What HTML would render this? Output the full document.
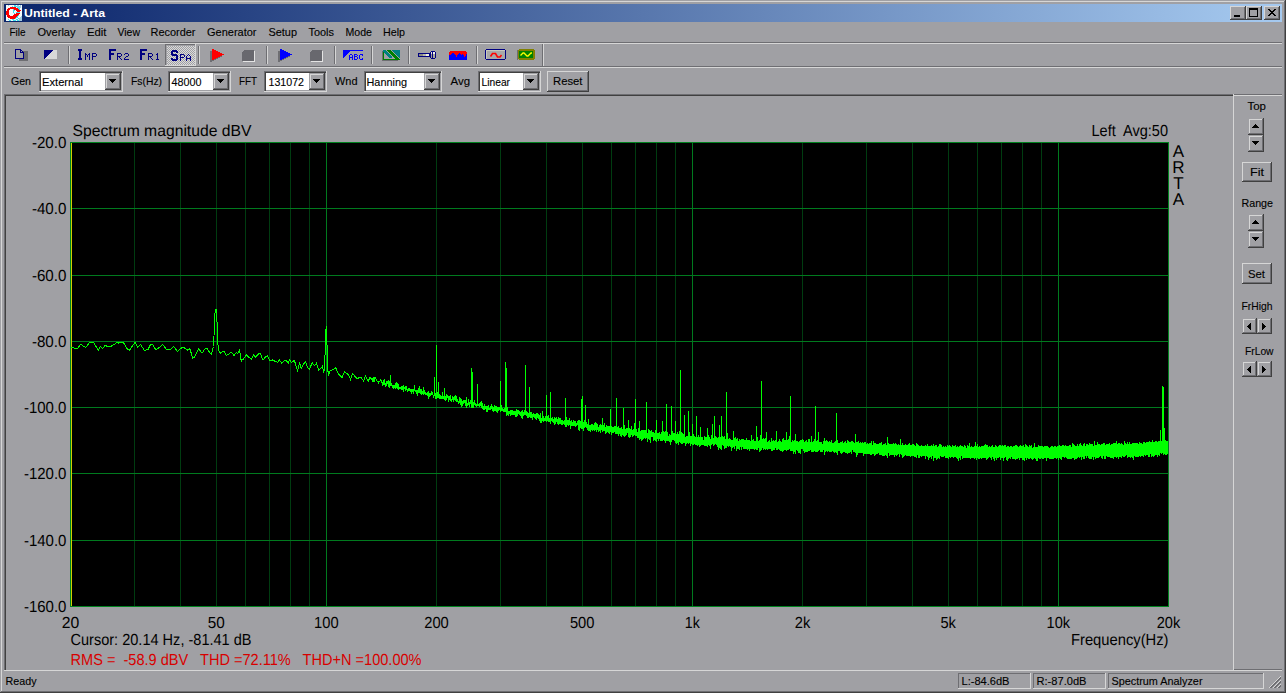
<!DOCTYPE html><html><head><meta charset="utf-8"><style>html,body{margin:0;padding:0;background:#A0A0A4;overflow:hidden}svg{display:block}text{font-family:"Liberation Sans",sans-serif}</style></head><body><svg width="1286" height="693" viewBox="0 0 1286 693">
<rect x="0" y="0" width="1286" height="693" fill="#A0A0A4" />
<rect x="1" y="1" width="1284" height="1" fill="#D6D6D6" />
<rect x="1" y="1" width="1" height="691" fill="#D6D6D6" />
<rect x="1284" y="1" width="1" height="691" fill="#6E6E72" />
<rect x="1" y="691" width="1284" height="1" fill="#6E6E72" />
<rect x="1285" y="0" width="1" height="693" fill="#404040" />
<rect x="0" y="692" width="1286" height="1" fill="#404040" />
<defs><linearGradient id="tg" x1="0" x2="1" y1="0" y2="0"><stop offset="0" stop-color="#0A246A"/><stop offset="1" stop-color="#A6CAF0"/></linearGradient></defs>
<rect x="4" y="4" width="1278" height="18" fill="url(#tg)" />
<rect x="6" y="5" width="16" height="16" fill="#F4FAFC" />
<path d="M10 7h6v1h-6zM8 8h10v1h-10zM7 9h3v1h-3zM14 9h5v1h-5zM7 10h2v1h-2zM16 10h5v1h-5zM6 11h3v1h-3zM17 11h3v1h-3zM6 12h3v1h-3zM6 13h3v1h-3zM16 13h4v1h-4zM6 14h3v1h-3zM14 14h5v1h-5zM7 15h3v1h-3zM13 15h5v1h-5zM7 16h10v1h-10zM8 17h8v1h-8zM10 18h5v1h-5z" fill="#FF0000"/>
<path d="M14 5h2v1h-2zM12 6h1v1h-1zM14 6h3v1h-3zM19 6h1v1h-1zM17 7h2v1h-2zM18 8h2v1h-2zM13 9h1v1h-1zM19 9h1v1h-1zM13 10h2v1h-2zM13 11h1v1h-1zM13 12h1v1h-1zM16 12h4v1h-4zM14 13h1v1h-1zM18 15h1v1h-1zM17 16h1v1h-1zM16 17h2v1h-2zM15 18h1v1h-1zM18 18h1v1h-1zM8 19h1v1h-1zM12 19h2v1h-2zM16 19h2v1h-2zM9 20h2v1h-2zM13 20h3v1h-3zM17 20h2v1h-2z" fill="#40E0F0"/>
<path d="M8 5h1v1h-1zM17 5h2v1h-2zM20 5h1v1h-1zM17 6h2v1h-2zM20 6h1v1h-1zM19 7h2v1h-2zM21 16h1v1h-1zM20 17h2v1h-2zM19 18h3v1h-3zM19 19h3v1h-3zM19 20h3v1h-3z" fill="#A0C8E0"/>
<text x="24" y="17" font-size="11" fill="#FFFFFF" font-weight="bold" text-anchor="start" textLength="81" lengthAdjust="spacingAndGlyphs"  xml:space="preserve">Untitled - Arta</text>
<rect x="1230" y="6" width="16" height="14" fill="#A0A0A4" />
<rect x="1230" y="6" width="16" height="1" fill="#D6D6D6" />
<rect x="1230" y="6" width="1" height="14" fill="#D6D6D6" />
<rect x="1230" y="19" width="16" height="1" fill="#404040" />
<rect x="1245" y="6" width="1" height="14" fill="#404040" />
<rect x="1231" y="18" width="14" height="1" fill="#6E6E72" />
<rect x="1244" y="7" width="1" height="12" fill="#6E6E72" />
<rect x="1246" y="6" width="16" height="14" fill="#A0A0A4" />
<rect x="1246" y="6" width="16" height="1" fill="#D6D6D6" />
<rect x="1246" y="6" width="1" height="14" fill="#D6D6D6" />
<rect x="1246" y="19" width="16" height="1" fill="#404040" />
<rect x="1261" y="6" width="1" height="14" fill="#404040" />
<rect x="1247" y="18" width="14" height="1" fill="#6E6E72" />
<rect x="1260" y="7" width="1" height="12" fill="#6E6E72" />
<rect x="1264" y="6" width="16" height="14" fill="#A0A0A4" />
<rect x="1264" y="6" width="16" height="1" fill="#D6D6D6" />
<rect x="1264" y="6" width="1" height="14" fill="#D6D6D6" />
<rect x="1264" y="19" width="16" height="1" fill="#404040" />
<rect x="1279" y="6" width="1" height="14" fill="#404040" />
<rect x="1265" y="18" width="14" height="1" fill="#6E6E72" />
<rect x="1278" y="7" width="1" height="12" fill="#6E6E72" />
<rect x="1234" y="15" width="6" height="2" fill="#000" />
<rect x="1249" y="8" width="9" height="2" fill="#000" />
<rect x="1249" y="16" width="9" height="1" fill="#000" />
<rect x="1249" y="8" width="1" height="9" fill="#000" />
<rect x="1257" y="8" width="1" height="9" fill="#000" />
<path d="M1268 9h2v1h-2zM1274 9h2v1h-2zM1269 10h2v1h-2zM1273 10h2v1h-2zM1270 11h4v1h-4zM1271 12h2v1h-2zM1270 13h4v1h-4zM1269 14h2v1h-2zM1273 14h2v1h-2zM1268 15h2v1h-2zM1274 15h2v1h-2z" fill="#000"/>
<text x="9.5" y="36" font-size="11" fill="#000" font-weight="normal" text-anchor="start" textLength="16" lengthAdjust="spacingAndGlyphs" stroke="#000" stroke-width="0.12"  xml:space="preserve">File</text>
<text x="37.5" y="36" font-size="11" fill="#000" font-weight="normal" text-anchor="start" textLength="38" lengthAdjust="spacingAndGlyphs" stroke="#000" stroke-width="0.12"  xml:space="preserve">Overlay</text>
<text x="87.0" y="36" font-size="11" fill="#000" font-weight="normal" text-anchor="start" textLength="19.5" lengthAdjust="spacingAndGlyphs" stroke="#000" stroke-width="0.12"  xml:space="preserve">Edit</text>
<text x="117.5" y="36" font-size="11" fill="#000" font-weight="normal" text-anchor="start" textLength="22.5" lengthAdjust="spacingAndGlyphs" stroke="#000" stroke-width="0.12"  xml:space="preserve">View</text>
<text x="150.5" y="36" font-size="11" fill="#000" font-weight="normal" text-anchor="start" textLength="45" lengthAdjust="spacingAndGlyphs" stroke="#000" stroke-width="0.12"  xml:space="preserve">Recorder</text>
<text x="207.0" y="36" font-size="11" fill="#000" font-weight="normal" text-anchor="start" textLength="49.5" lengthAdjust="spacingAndGlyphs" stroke="#000" stroke-width="0.12"  xml:space="preserve">Generator</text>
<text x="268.5" y="36" font-size="11" fill="#000" font-weight="normal" text-anchor="start" textLength="28.5" lengthAdjust="spacingAndGlyphs" stroke="#000" stroke-width="0.12"  xml:space="preserve">Setup</text>
<text x="308.5" y="36" font-size="11" fill="#000" font-weight="normal" text-anchor="start" textLength="25.5" lengthAdjust="spacingAndGlyphs" stroke="#000" stroke-width="0.12"  xml:space="preserve">Tools</text>
<text x="345.5" y="36" font-size="11" fill="#000" font-weight="normal" text-anchor="start" textLength="26.5" lengthAdjust="spacingAndGlyphs" stroke="#000" stroke-width="0.12"  xml:space="preserve">Mode</text>
<text x="383.0" y="36" font-size="11" fill="#000" font-weight="normal" text-anchor="start" textLength="22" lengthAdjust="spacingAndGlyphs" stroke="#000" stroke-width="0.12"  xml:space="preserve">Help</text>
<rect x="4" y="42" width="1278" height="1" fill="#6E6E72" />
<rect x="4" y="43" width="1278" height="1" fill="#D6D6D6" />
<rect x="4" y="66" width="1278" height="1" fill="#6E6E72" />
<rect x="4" y="67" width="1278" height="1" fill="#D6D6D6" />
<rect x="19" y="51" width="9" height="10" fill="#6E6E72" />
<rect x="15" y="49" width="8" height="10" fill="#A0A0A4" />
<path d="M15 49h6v1h-6zM15 50h1v1h-1zM20 50h2v1h-2zM15 51h1v1h-1zM20 51h1v1h-1zM22 51h1v1h-1zM15 52h1v1h-1zM20 52h4v1h-4zM15 53h1v1h-1zM23 53h1v1h-1zM15 54h1v1h-1zM23 54h1v1h-1zM15 55h1v1h-1zM23 55h1v1h-1zM15 56h1v1h-1zM23 56h1v1h-1zM15 57h1v1h-1zM23 57h1v1h-1zM15 58h9v1h-9z" fill="#000080"/>
<path d="M53 50h4v9h-13z" fill="#D8D8D8" shape-rendering="crispEdges"/>
<path d="M44 50h9l-9 9z" fill="#000080" shape-rendering="crispEdges"/>
<rect x="68" y="46" width="1" height="18" fill="#6E6E72" />
<rect x="69" y="46" width="1" height="18" fill="#D6D6D6" />
<defs><pattern id="dith" width="2" height="2" patternUnits="userSpaceOnUse"><rect width="2" height="2" fill="#A0A0A4"/><rect x="1" width="1" height="1" fill="#DADADA"/><rect y="1" width="1" height="1" fill="#DADADA"/></pattern></defs>
<rect x="165" y="44" width="31" height="22" fill="url(#dith)" />
<rect x="165" y="44" width="31" height="1" fill="#6E6E72" />
<rect x="165" y="44" width="1" height="22" fill="#6E6E72" />
<rect x="166" y="45" width="29" height="1" fill="#A0A0A4" />
<rect x="166" y="45" width="1" height="20" fill="#A0A0A4" />
<rect x="165" y="65" width="31" height="1" fill="#D6D6D6" />
<rect x="195" y="44" width="1" height="22" fill="#D6D6D6" />
<rect x="78" y="49" width="4" height="2" fill="#000080" />
<rect x="79" y="51" width="2" height="7" fill="#000080" />
<rect x="78" y="58" width="4" height="2" fill="#000080" />
<path d="M85 53h1v1h-1zM89 53h1v1h-1zM85 54h1v1h-1zM86 54h1v1h-1zM88 54h1v1h-1zM89 54h1v1h-1zM85 55h1v1h-1zM87 55h1v1h-1zM89 55h1v1h-1zM85 56h1v1h-1zM87 56h1v1h-1zM89 56h1v1h-1zM85 57h1v1h-1zM89 57h1v1h-1zM85 58h1v1h-1zM89 58h1v1h-1zM85 59h1v1h-1zM89 59h1v1h-1z" fill="#000080"/>
<path d="M92 53h1v1h-1zM93 53h1v1h-1zM94 53h1v1h-1zM95 53h1v1h-1zM92 54h1v1h-1zM96 54h1v1h-1zM92 55h1v1h-1zM96 55h1v1h-1zM92 56h1v1h-1zM93 56h1v1h-1zM94 56h1v1h-1zM95 56h1v1h-1zM92 57h1v1h-1zM92 58h1v1h-1zM92 59h1v1h-1z" fill="#000080"/>
<rect x="109" y="49" width="2" height="11" fill="#000080" />
<rect x="109" y="49" width="7" height="2" fill="#000080" />
<rect x="109" y="53" width="5" height="2" fill="#000080" />
<path d="M117 53h1v1h-1zM118 53h1v1h-1zM119 53h1v1h-1zM120 53h1v1h-1zM117 54h1v1h-1zM121 54h1v1h-1zM117 55h1v1h-1zM121 55h1v1h-1zM117 56h1v1h-1zM118 56h1v1h-1zM119 56h1v1h-1zM120 56h1v1h-1zM117 57h1v1h-1zM119 57h1v1h-1zM117 58h1v1h-1zM120 58h1v1h-1zM117 59h1v1h-1zM121 59h1v1h-1z" fill="#000080"/>
<path d="M125 53h1v1h-1zM126 53h1v1h-1zM127 53h1v1h-1zM124 54h1v1h-1zM128 54h1v1h-1zM128 55h1v1h-1zM126 56h1v1h-1zM127 56h1v1h-1zM125 57h1v1h-1zM124 58h1v1h-1zM124 59h1v1h-1zM125 59h1v1h-1zM126 59h1v1h-1zM127 59h1v1h-1zM128 59h1v1h-1z" fill="#000080"/>
<rect x="140" y="49" width="2" height="11" fill="#000080" />
<rect x="140" y="49" width="7" height="2" fill="#000080" />
<rect x="140" y="53" width="5" height="2" fill="#000080" />
<path d="M148 53h1v1h-1zM149 53h1v1h-1zM150 53h1v1h-1zM151 53h1v1h-1zM148 54h1v1h-1zM152 54h1v1h-1zM148 55h1v1h-1zM152 55h1v1h-1zM148 56h1v1h-1zM149 56h1v1h-1zM150 56h1v1h-1zM151 56h1v1h-1zM148 57h1v1h-1zM150 57h1v1h-1zM148 58h1v1h-1zM151 58h1v1h-1zM148 59h1v1h-1zM152 59h1v1h-1z" fill="#000080"/>
<path d="M157 53h1v1h-1zM156 54h1v1h-1zM157 54h1v1h-1zM157 55h1v1h-1zM157 56h1v1h-1zM157 57h1v1h-1zM157 58h1v1h-1zM156 59h1v1h-1zM157 59h1v1h-1zM158 59h1v1h-1z" fill="#000080"/>
<path d="M172 50h5v1h-5zM171 51h7v1h-7zM171 52h2v1h-2zM176 52h2v1h-2zM171 53h2v1h-2zM171 54h6v1h-6zM172 55h6v1h-6zM176 56h2v1h-2zM176 57h2v1h-2zM171 58h2v1h-2zM176 58h2v1h-2zM171 59h7v1h-7zM172 60h5v1h-5z" fill="#000080"/>
<path d="M180 54h1v1h-1zM181 54h1v1h-1zM182 54h1v1h-1zM183 54h1v1h-1zM180 55h1v1h-1zM184 55h1v1h-1zM180 56h1v1h-1zM184 56h1v1h-1zM180 57h1v1h-1zM181 57h1v1h-1zM182 57h1v1h-1zM183 57h1v1h-1zM180 58h1v1h-1zM180 59h1v1h-1zM180 60h1v1h-1z" fill="#000080"/>
<path d="M188 54h1v1h-1zM187 55h1v1h-1zM189 55h1v1h-1zM186 56h1v1h-1zM190 56h1v1h-1zM186 57h1v1h-1zM190 57h1v1h-1zM186 58h1v1h-1zM187 58h1v1h-1zM188 58h1v1h-1zM189 58h1v1h-1zM190 58h1v1h-1zM186 59h1v1h-1zM190 59h1v1h-1zM186 60h1v1h-1zM190 60h1v1h-1z" fill="#000080"/>
<rect x="198" y="46" width="1" height="18" fill="#6E6E72" />
<rect x="199" y="46" width="1" height="18" fill="#D6D6D6" />
<path d="M212 49h2v1h-2zM212 50h4v1h-4zM212 51h6v1h-6zM212 52h8v1h-8zM212 53h10v1h-10zM212 54h12v1h-12zM212 55h10v1h-10zM212 56h8v1h-8zM212 57h6v1h-6zM212 58h4v1h-4zM212 59h2v1h-2z" fill="#6E6E72" transform="translate(-2,2)"/>
<path d="M212 49h2v1h-2zM212 50h4v1h-4zM212 51h6v1h-6zM212 52h8v1h-8zM212 53h10v1h-10zM212 54h12v1h-12zM212 55h10v1h-10zM212 56h8v1h-8zM212 57h6v1h-6zM212 58h4v1h-4zM212 59h2v1h-2z" fill="#FF0000"/>
<path d="M244 50H254V60L253 61H242V52Z" fill="#E4E4E4" transform="translate(1,1)" shape-rendering="crispEdges"/>
<path d="M244 50H254V60L253 61H242V52Z" fill="#68686E" shape-rendering="crispEdges"/>
<rect x="266" y="46" width="1" height="18" fill="#6E6E72" />
<rect x="267" y="46" width="1" height="18" fill="#D6D6D6" />
<path d="M280 49h2v1h-2zM280 50h4v1h-4zM280 51h6v1h-6zM280 52h8v1h-8zM280 53h10v1h-10zM280 54h12v1h-12zM280 55h10v1h-10zM280 56h8v1h-8zM280 57h6v1h-6zM280 58h4v1h-4zM280 59h2v1h-2z" fill="#6E6E72" transform="translate(-2,2)"/>
<path d="M280 49h2v1h-2zM280 50h4v1h-4zM280 51h6v1h-6zM280 52h8v1h-8zM280 53h10v1h-10zM280 54h12v1h-12zM280 55h10v1h-10zM280 56h8v1h-8zM280 57h6v1h-6zM280 58h4v1h-4zM280 59h2v1h-2z" fill="#0000FF"/>
<path d="M312 50H322V60L321 61H310V52Z" fill="#E4E4E4" transform="translate(1,1)" shape-rendering="crispEdges"/>
<path d="M312 50H322V60L321 61H310V52Z" fill="#68686E" shape-rendering="crispEdges"/>
<rect x="334" y="46" width="1" height="18" fill="#6E6E72" />
<rect x="335" y="46" width="1" height="18" fill="#D6D6D6" />
<rect x="343" y="50" width="20" height="1" fill="#0000FF" />
<path d="M343 51h7v1h-7zM343 52h6v1h-6zM343 53h5v1h-5zM343 54h4v1h-4zM343 55h3v1h-3zM343 56h2v1h-2zM343 57h1v1h-1z" fill="#0000FF"/>
<path d="M350 54h2v1h-2zM349 55h1v1h-1zM352 55h1v1h-1zM349 56h1v1h-1zM352 56h1v1h-1zM349 57h4v1h-4zM349 58h1v1h-1zM352 58h1v1h-1zM349 59h1v1h-1zM352 59h1v1h-1z" fill="#0000FF"/>
<path d="M354 54h3v1h-3zM354 55h1v1h-1zM357 55h1v1h-1zM354 56h3v1h-3zM354 57h1v1h-1zM357 57h1v1h-1zM354 58h1v1h-1zM357 58h1v1h-1zM354 59h3v1h-3z" fill="#0000FF"/>
<path d="M360 54h3v1h-3zM359 55h1v1h-1zM362 55h1v1h-1zM359 56h1v1h-1zM359 57h1v1h-1zM359 58h1v1h-1zM362 58h1v1h-1zM360 59h3v1h-3z" fill="#0000FF"/>
<rect x="371" y="46" width="1" height="18" fill="#6E6E72" />
<rect x="372" y="46" width="1" height="18" fill="#D6D6D6" />
<rect x="382" y="51" width="1" height="10" fill="#6E6E72" />
<rect x="382" y="60" width="16" height="1" fill="#6E6E72" />
<path d="M383 50h3v1h-3zM392 50h8v1h-8zM383 51h4v1h-4zM393 51h7v1h-7zM384 52h4v1h-4zM394 52h6v1h-6zM385 53h4v1h-4zM395 53h5v1h-5zM386 54h4v1h-4zM396 54h4v1h-4zM387 55h4v1h-4zM397 55h3v1h-3zM388 56h4v1h-4zM398 56h2v1h-2zM389 57h3v1h-3zM399 57h1v1h-1z" fill="#008080"/>
<path d="M387 50h4v1h-4zM388 51h4v1h-4zM389 52h4v1h-4zM390 53h4v1h-4zM391 54h4v1h-4zM392 55h4v1h-4zM393 56h4v1h-4zM394 57h4v1h-4zM395 58h4v1h-4zM396 59h4v1h-4zM383 52h1v8h-1z M383 59h17v1h-17z" fill="#008000"/>
<rect x="408" y="46" width="1" height="18" fill="#6E6E72" />
<rect x="409" y="46" width="1" height="18" fill="#D6D6D6" />
<rect x="418" y="53" width="13" height="4" fill="#000080" />
<rect x="419" y="54" width="4" height="2" fill="#8C8C80" />
<rect x="423" y="54" width="3" height="2" fill="#B8B8A8" />
<rect x="426" y="54" width="3" height="2" fill="#F0F0E0" />
<rect x="431" y="51" width="4" height="1" fill="#000080" />
<rect x="431" y="58" width="4" height="1" fill="#000080" />
<rect x="430" y="52" width="1" height="6" fill="#000080" />
<rect x="435" y="52" width="1" height="6" fill="#000080" />
<rect x="432" y="52" width="1" height="6" fill="#000080" />
<rect x="431" y="52" width="1" height="6" fill="#9C9C90" />
<rect x="431" y="52" width="1" height="2" fill="#E8E8E0" />
<rect x="433" y="52" width="2" height="6" fill="#A8A898" />
<rect x="433" y="52" width="2" height="2" fill="#F4F4EC" />
<rect x="449" y="51" width="18" height="9" fill="#0000FF" />
<path d="M449 52h1v3h-1zM450 51h1v4h-1zM451 51h1v3h-1zM452 51h1v2h-1zM453 51h1v2h-1zM454 51h1v3h-1zM455 51h1v4h-1zM456 51h1v6h-1zM457 51h1v4h-1zM458 51h1v3h-1zM459 51h1v2h-1zM460 51h1v3h-1zM461 51h1v4h-1zM462 51h1v3h-1zM463 51h1v4h-1zM464 51h1v6h-1zM465 51h1v5h-1zM466 52h1v2h-1z" fill="#FF0000"/>
<rect x="449" y="51" width="1" height="1" fill="#A0A0A4" />
<rect x="466" y="51" width="1" height="1" fill="#A0A0A4" />
<rect x="476" y="46" width="1" height="18" fill="#6E6E72" />
<rect x="477" y="46" width="1" height="18" fill="#D6D6D6" />
<path d="M485 50h1v-1h19v1h1v9h-1v1h-19v-1h-1z M486 50v9h19v-9z" fill="#000080" fill-rule="evenodd"/>
<rect x="486" y="50" width="19" height="9" fill="#A8A8A8" />
<rect x="486" y="50" width="19" height="1" fill="#C8C8C0" />
<rect x="486" y="50" width="1" height="9" fill="#C8C8C0" />
<path d="M490.5 56.5l2-3h3l2 3.5h2.5l1.5-2" fill="none" stroke="#FF0000" stroke-width="1.6"/>
<rect x="517" y="50" width="1" height="10" fill="#6E6E72" />
<path d="M519 49h15v1h1v9h-1v1h-15v-1h-1v-9h1z" fill="#808000"/>
<rect x="519" y="51" width="14" height="7" fill="#008000" />
<path d="M520.5 55.5l2.5-2.5h1l3 3h1l3-3h1" fill="none" stroke="#FFFF00" stroke-width="1.3"/>
<rect x="542" y="44" width="1" height="22" fill="#6E6E72" />
<rect x="543" y="44" width="1" height="22" fill="#D6D6D6" />
<text x="11.0" y="85" font-size="11" fill="#000" font-weight="normal" text-anchor="start" textLength="20" lengthAdjust="spacingAndGlyphs" stroke="#000" stroke-width="0.12"  xml:space="preserve">Gen</text>
<text x="131.0" y="85" font-size="11" fill="#000" font-weight="normal" text-anchor="start" textLength="31" lengthAdjust="spacingAndGlyphs" stroke="#000" stroke-width="0.12"  xml:space="preserve">Fs(Hz)</text>
<text x="239.0" y="85" font-size="11" fill="#000" font-weight="normal" text-anchor="start" textLength="18" lengthAdjust="spacingAndGlyphs" stroke="#000" stroke-width="0.12"  xml:space="preserve">FFT</text>
<text x="335.0" y="85" font-size="11" fill="#000" font-weight="normal" text-anchor="start" textLength="22.5" lengthAdjust="spacingAndGlyphs" stroke="#000" stroke-width="0.12"  xml:space="preserve">Wnd</text>
<text x="450.5" y="85" font-size="11" fill="#000" font-weight="normal" text-anchor="start" textLength="19.5" lengthAdjust="spacingAndGlyphs" stroke="#000" stroke-width="0.12"  xml:space="preserve">Avg</text>
<rect x="39" y="71" width="84" height="21" fill="#A0A0A4" />
<rect x="39" y="71" width="84" height="1" fill="#6E6E72" />
<rect x="39" y="71" width="1" height="21" fill="#6E6E72" />
<rect x="40" y="72" width="82" height="1" fill="#404040" />
<rect x="40" y="72" width="1" height="19" fill="#404040" />
<rect x="39" y="91" width="84" height="1" fill="#D6D6D6" />
<rect x="122" y="71" width="1" height="21" fill="#D6D6D6" />
<rect x="41" y="73" width="80" height="17" fill="#FFFFFF" />
<rect x="105" y="73" width="16" height="17" fill="#A0A0A4" />
<rect x="106" y="74" width="14" height="1" fill="#D6D6D6" />
<rect x="106" y="74" width="1" height="15" fill="#D6D6D6" />
<rect x="105" y="89" width="16" height="1" fill="#404040" />
<rect x="120" y="73" width="1" height="17" fill="#404040" />
<rect x="106" y="88" width="14" height="1" fill="#6E6E72" />
<rect x="119" y="74" width="1" height="15" fill="#6E6E72" />
<path d="M109 79h7l-3.5 4z" fill="#000" shape-rendering="crispEdges"/>
<text x="42.0" y="86" font-size="11" fill="#000" font-weight="normal" text-anchor="start" textLength="41" lengthAdjust="spacingAndGlyphs" stroke="#000" stroke-width="0.12"  xml:space="preserve">External</text>
<rect x="168" y="71" width="63" height="21" fill="#A0A0A4" />
<rect x="168" y="71" width="63" height="1" fill="#6E6E72" />
<rect x="168" y="71" width="1" height="21" fill="#6E6E72" />
<rect x="169" y="72" width="61" height="1" fill="#404040" />
<rect x="169" y="72" width="1" height="19" fill="#404040" />
<rect x="168" y="91" width="63" height="1" fill="#D6D6D6" />
<rect x="230" y="71" width="1" height="21" fill="#D6D6D6" />
<rect x="170" y="73" width="59" height="17" fill="#FFFFFF" />
<rect x="213" y="73" width="16" height="17" fill="#A0A0A4" />
<rect x="214" y="74" width="14" height="1" fill="#D6D6D6" />
<rect x="214" y="74" width="1" height="15" fill="#D6D6D6" />
<rect x="213" y="89" width="16" height="1" fill="#404040" />
<rect x="228" y="73" width="1" height="17" fill="#404040" />
<rect x="214" y="88" width="14" height="1" fill="#6E6E72" />
<rect x="227" y="74" width="1" height="15" fill="#6E6E72" />
<path d="M217 79h7l-3.5 4z" fill="#000" shape-rendering="crispEdges"/>
<text x="171.5" y="86" font-size="11" fill="#000" font-weight="normal" text-anchor="start" textLength="30" lengthAdjust="spacingAndGlyphs" stroke="#000" stroke-width="0.12"  xml:space="preserve">48000</text>
<rect x="264" y="71" width="63" height="21" fill="#A0A0A4" />
<rect x="264" y="71" width="63" height="1" fill="#6E6E72" />
<rect x="264" y="71" width="1" height="21" fill="#6E6E72" />
<rect x="265" y="72" width="61" height="1" fill="#404040" />
<rect x="265" y="72" width="1" height="19" fill="#404040" />
<rect x="264" y="91" width="63" height="1" fill="#D6D6D6" />
<rect x="326" y="71" width="1" height="21" fill="#D6D6D6" />
<rect x="266" y="73" width="59" height="17" fill="#FFFFFF" />
<rect x="309" y="73" width="16" height="17" fill="#A0A0A4" />
<rect x="310" y="74" width="14" height="1" fill="#D6D6D6" />
<rect x="310" y="74" width="1" height="15" fill="#D6D6D6" />
<rect x="309" y="89" width="16" height="1" fill="#404040" />
<rect x="324" y="73" width="1" height="17" fill="#404040" />
<rect x="310" y="88" width="14" height="1" fill="#6E6E72" />
<rect x="323" y="74" width="1" height="15" fill="#6E6E72" />
<path d="M313 79h7l-3.5 4z" fill="#000" shape-rendering="crispEdges"/>
<text x="268.5" y="86" font-size="11" fill="#000" font-weight="normal" text-anchor="start" textLength="35.5" lengthAdjust="spacingAndGlyphs" stroke="#000" stroke-width="0.12"  xml:space="preserve">131072</text>
<rect x="364" y="71" width="78" height="21" fill="#A0A0A4" />
<rect x="364" y="71" width="78" height="1" fill="#6E6E72" />
<rect x="364" y="71" width="1" height="21" fill="#6E6E72" />
<rect x="365" y="72" width="76" height="1" fill="#404040" />
<rect x="365" y="72" width="1" height="19" fill="#404040" />
<rect x="364" y="91" width="78" height="1" fill="#D6D6D6" />
<rect x="441" y="71" width="1" height="21" fill="#D6D6D6" />
<rect x="366" y="73" width="74" height="17" fill="#FFFFFF" />
<rect x="424" y="73" width="16" height="17" fill="#A0A0A4" />
<rect x="425" y="74" width="14" height="1" fill="#D6D6D6" />
<rect x="425" y="74" width="1" height="15" fill="#D6D6D6" />
<rect x="424" y="89" width="16" height="1" fill="#404040" />
<rect x="439" y="73" width="1" height="17" fill="#404040" />
<rect x="425" y="88" width="14" height="1" fill="#6E6E72" />
<rect x="438" y="74" width="1" height="15" fill="#6E6E72" />
<path d="M428 79h7l-3.5 4z" fill="#000" shape-rendering="crispEdges"/>
<text x="366.5" y="86" font-size="11" fill="#000" font-weight="normal" text-anchor="start" textLength="40.5" lengthAdjust="spacingAndGlyphs" stroke="#000" stroke-width="0.12"  xml:space="preserve">Hanning</text>
<rect x="478" y="71" width="63" height="21" fill="#A0A0A4" />
<rect x="478" y="71" width="63" height="1" fill="#6E6E72" />
<rect x="478" y="71" width="1" height="21" fill="#6E6E72" />
<rect x="479" y="72" width="61" height="1" fill="#404040" />
<rect x="479" y="72" width="1" height="19" fill="#404040" />
<rect x="478" y="91" width="63" height="1" fill="#D6D6D6" />
<rect x="540" y="71" width="1" height="21" fill="#D6D6D6" />
<rect x="480" y="73" width="59" height="17" fill="#FFFFFF" />
<rect x="523" y="73" width="16" height="17" fill="#A0A0A4" />
<rect x="524" y="74" width="14" height="1" fill="#D6D6D6" />
<rect x="524" y="74" width="1" height="15" fill="#D6D6D6" />
<rect x="523" y="89" width="16" height="1" fill="#404040" />
<rect x="538" y="73" width="1" height="17" fill="#404040" />
<rect x="524" y="88" width="14" height="1" fill="#6E6E72" />
<rect x="537" y="74" width="1" height="15" fill="#6E6E72" />
<path d="M527 79h7l-3.5 4z" fill="#000" shape-rendering="crispEdges"/>
<text x="481.5" y="86" font-size="11" fill="#000" font-weight="normal" text-anchor="start" textLength="28.5" lengthAdjust="spacingAndGlyphs" stroke="#000" stroke-width="0.12"  xml:space="preserve">Linear</text>
<rect x="547" y="71" width="42" height="21" fill="#A0A0A4" />
<rect x="547" y="71" width="42" height="1" fill="#D6D6D6" />
<rect x="547" y="71" width="1" height="21" fill="#D6D6D6" />
<rect x="547" y="91" width="42" height="1" fill="#404040" />
<rect x="588" y="71" width="1" height="21" fill="#404040" />
<rect x="548" y="90" width="40" height="1" fill="#6E6E72" />
<rect x="587" y="72" width="1" height="19" fill="#6E6E72" />
<text x="553" y="85" font-size="11" fill="#000" font-weight="normal" text-anchor="start" textLength="29.5" lengthAdjust="spacingAndGlyphs" stroke="#000" stroke-width="0.12"  xml:space="preserve">Reset</text>
<rect x="4" y="94" width="1230" height="1" fill="#6E6E72" />
<rect x="4" y="94" width="1" height="577" fill="#6E6E72" />
<rect x="5" y="95" width="1228" height="1" fill="#404040" />
<rect x="5" y="95" width="1" height="575" fill="#404040" />
<rect x="4" y="670" width="1230" height="1" fill="#D6D6D6" />
<rect x="1233" y="94" width="1" height="577" fill="#D6D6D6" />
<rect x="1234" y="94" width="48" height="1" fill="#6E6E72" />
<rect x="1234" y="95" width="48" height="1" fill="#D6D6D6" />
<rect x="1234" y="669" width="48" height="1" fill="#6E6E72" />
<rect x="1234" y="670" width="48" height="1" fill="#D6D6D6" />
<rect x="70" y="142" width="1099" height="465" fill="#000000" />
<rect x="134" y="143" width="1" height="463" fill="#003C10" />
<rect x="180" y="143" width="1" height="463" fill="#003C10" />
<rect x="216" y="143" width="1" height="463" fill="#003C10" />
<rect x="245" y="143" width="1" height="463" fill="#003C10" />
<rect x="269" y="143" width="1" height="463" fill="#003C10" />
<rect x="290" y="143" width="1" height="463" fill="#003C10" />
<rect x="309" y="143" width="1" height="463" fill="#003C10" />
<rect x="326" y="143" width="1" height="463" fill="#007A1E" />
<rect x="436" y="143" width="1" height="463" fill="#003C10" />
<rect x="500" y="143" width="1" height="463" fill="#003C10" />
<rect x="546" y="143" width="1" height="463" fill="#003C10" />
<rect x="582" y="143" width="1" height="463" fill="#003C10" />
<rect x="611" y="143" width="1" height="463" fill="#003C10" />
<rect x="635" y="143" width="1" height="463" fill="#003C10" />
<rect x="656" y="143" width="1" height="463" fill="#003C10" />
<rect x="675" y="143" width="1" height="463" fill="#003C10" />
<rect x="692" y="143" width="1" height="463" fill="#007A1E" />
<rect x="802" y="143" width="1" height="463" fill="#003C10" />
<rect x="866" y="143" width="1" height="463" fill="#003C10" />
<rect x="912" y="143" width="1" height="463" fill="#003C10" />
<rect x="948" y="143" width="1" height="463" fill="#003C10" />
<rect x="977" y="143" width="1" height="463" fill="#003C10" />
<rect x="1001" y="143" width="1" height="463" fill="#003C10" />
<rect x="1022" y="143" width="1" height="463" fill="#003C10" />
<rect x="1041" y="143" width="1" height="463" fill="#003C10" />
<rect x="1058" y="143" width="1" height="463" fill="#007A1E" />
<rect x="71" y="208" width="1097" height="1" fill="#007A1E" />
<rect x="71" y="275" width="1097" height="1" fill="#007A1E" />
<rect x="71" y="341" width="1097" height="1" fill="#007A1E" />
<rect x="71" y="407" width="1097" height="1" fill="#007A1E" />
<rect x="71" y="473" width="1097" height="1" fill="#007A1E" />
<rect x="71" y="540" width="1097" height="1" fill="#007A1E" />
<rect x="70" y="142" width="1099" height="1" fill="#00821E" />
<rect x="70" y="606" width="1099" height="1" fill="#00821E" />
<rect x="70" y="142" width="1" height="465" fill="#00821E" />
<rect x="1168" y="142" width="1" height="465" fill="#00821E" />
<rect x="71" y="143" width="1" height="463" fill="#D0D000" />
<text x="66.4" y="148" font-size="16" fill="#000" font-weight="normal" text-anchor="end" textLength="34.5" lengthAdjust="spacingAndGlyphs" text-rendering="geometricPrecision"  xml:space="preserve">-20.0</text>
<text x="66.4" y="214" font-size="16" fill="#000" font-weight="normal" text-anchor="end" textLength="34.5" lengthAdjust="spacingAndGlyphs" text-rendering="geometricPrecision"  xml:space="preserve">-40.0</text>
<text x="66.4" y="281" font-size="16" fill="#000" font-weight="normal" text-anchor="end" textLength="34.5" lengthAdjust="spacingAndGlyphs" text-rendering="geometricPrecision"  xml:space="preserve">-60.0</text>
<text x="66.4" y="347" font-size="16" fill="#000" font-weight="normal" text-anchor="end" textLength="34.5" lengthAdjust="spacingAndGlyphs" text-rendering="geometricPrecision"  xml:space="preserve">-80.0</text>
<text x="66.4" y="413" font-size="16" fill="#000" font-weight="normal" text-anchor="end" textLength="42.5" lengthAdjust="spacingAndGlyphs" text-rendering="geometricPrecision"  xml:space="preserve">-100.0</text>
<text x="66.4" y="479" font-size="16" fill="#000" font-weight="normal" text-anchor="end" textLength="42.5" lengthAdjust="spacingAndGlyphs" text-rendering="geometricPrecision"  xml:space="preserve">-120.0</text>
<text x="66.4" y="546" font-size="16" fill="#000" font-weight="normal" text-anchor="end" textLength="42.5" lengthAdjust="spacingAndGlyphs" text-rendering="geometricPrecision"  xml:space="preserve">-140.0</text>
<text x="66.4" y="612" font-size="16" fill="#000" font-weight="normal" text-anchor="end" textLength="42.5" lengthAdjust="spacingAndGlyphs" text-rendering="geometricPrecision"  xml:space="preserve">-160.0</text>
<text x="70.5" y="628" font-size="16" fill="#000" font-weight="normal" text-anchor="middle" textLength="17.5" lengthAdjust="spacingAndGlyphs" text-rendering="geometricPrecision"  xml:space="preserve">20</text>
<text x="216.14604317396575" y="628" font-size="16" fill="#000" font-weight="normal" text-anchor="middle" textLength="17" lengthAdjust="spacingAndGlyphs" text-rendering="geometricPrecision"  xml:space="preserve">50</text>
<text x="326.3230215869829" y="628" font-size="16" fill="#000" font-weight="normal" text-anchor="middle" textLength="24.5" lengthAdjust="spacingAndGlyphs" text-rendering="geometricPrecision"  xml:space="preserve">100</text>
<text x="436.5" y="628" font-size="16" fill="#000" font-weight="normal" text-anchor="middle" textLength="24.5" lengthAdjust="spacingAndGlyphs" text-rendering="geometricPrecision"  xml:space="preserve">200</text>
<text x="582.1460431739658" y="628" font-size="16" fill="#000" font-weight="normal" text-anchor="middle" textLength="24.5" lengthAdjust="spacingAndGlyphs" text-rendering="geometricPrecision"  xml:space="preserve">500</text>
<text x="692.3230215869828" y="628" font-size="16" fill="#000" font-weight="normal" text-anchor="middle" textLength="15" lengthAdjust="spacingAndGlyphs" text-rendering="geometricPrecision"  xml:space="preserve">1k</text>
<text x="802.5" y="628" font-size="16" fill="#000" font-weight="normal" text-anchor="middle" textLength="15.5" lengthAdjust="spacingAndGlyphs" text-rendering="geometricPrecision"  xml:space="preserve">2k</text>
<text x="948.1460431739657" y="628" font-size="16" fill="#000" font-weight="normal" text-anchor="middle" textLength="15.5" lengthAdjust="spacingAndGlyphs" text-rendering="geometricPrecision"  xml:space="preserve">5k</text>
<text x="1058.3230215869828" y="628" font-size="16" fill="#000" font-weight="normal" text-anchor="middle" textLength="23.5" lengthAdjust="spacingAndGlyphs" text-rendering="geometricPrecision"  xml:space="preserve">10k</text>
<text x="1168.5" y="628" font-size="16" fill="#000" font-weight="normal" text-anchor="middle" textLength="23.5" lengthAdjust="spacingAndGlyphs" text-rendering="geometricPrecision"  xml:space="preserve">20k</text>
<text x="72.5" y="136" font-size="16" fill="#000" font-weight="normal" text-anchor="start" textLength="179" lengthAdjust="spacingAndGlyphs" text-rendering="geometricPrecision"  xml:space="preserve">Spectrum magnitude dBV</text>
<text x="1091.5" y="136" font-size="16" fill="#000" font-weight="normal" text-anchor="start" textLength="76.5" lengthAdjust="spacingAndGlyphs" text-rendering="geometricPrecision"  xml:space="preserve">Left  Avg:50</text>
<text x="1178.5" y="157" font-size="17" fill="#000" font-weight="normal" text-anchor="middle" text-rendering="geometricPrecision"  xml:space="preserve">A</text>
<text x="1178.5" y="173" font-size="17" fill="#000" font-weight="normal" text-anchor="middle" text-rendering="geometricPrecision"  xml:space="preserve">R</text>
<text x="1178.5" y="189" font-size="17" fill="#000" font-weight="normal" text-anchor="middle" text-rendering="geometricPrecision"  xml:space="preserve">T</text>
<text x="1178.5" y="205" font-size="17" fill="#000" font-weight="normal" text-anchor="middle" text-rendering="geometricPrecision"  xml:space="preserve">A</text>
<text x="1071" y="645" font-size="16" fill="#000" font-weight="normal" text-anchor="start" textLength="97.5" lengthAdjust="spacingAndGlyphs" text-rendering="geometricPrecision"  xml:space="preserve">Frequency(Hz)</text>
<text x="70.5" y="645" font-size="16" fill="#000" font-weight="normal" text-anchor="start" textLength="181" lengthAdjust="spacingAndGlyphs" text-rendering="geometricPrecision"  xml:space="preserve">Cursor: 20.14 Hz, -81.41 dB</text>
<text x="70.5" y="665" font-size="16" fill="#D80000" font-weight="normal" text-anchor="start" textLength="351" lengthAdjust="spacingAndGlyphs" text-rendering="geometricPrecision"  xml:space="preserve">RMS =  -58.9 dBV   THD =72.11%   THD+N =100.00%</text>
<path d="M71.0 347.4 L73.6 347.4 L74.5 348.5 L77.6 348.5 L80.4 344.4 L81.4 344.4 L83.6 346.5 L84.8 346.5 L85.7 347.6 L89.5 342.3 L93.5 342.3 L98.5 350.5 L100.3 346.3 L102.5 348.5 L105.3 345.2 L107.2 346.5 L110.6 346.5 L114.3 344.4 L117.1 342.1 L118.4 343.4 L119.3 342.3 L123.4 342.3 L126.5 348.0 L129.3 350.5 L135.2 342.1 L137.7 347.6 L140.5 344.4 L144.5 350.5 L148.0 349.5 L150.6 344.4 L152.6 344.4 L155.6 349.5 L158.1 348.5 L162.7 344.4 L166.2 349.0 L171.3 349.0 L173.8 346.5 L177.3 351.5 L181.4 348.0 L183.9 347.5 L187.4 350.0 L190.0 348.7 L192.5 358.0 L194.5 357.0 L198.5 348.7 L202.1 353.0 L205.1 348.7 L207.1 348.7 L211.2 354.5 L213.5 346.5 L214.5 325.3 L215.2 309.1 L216.5 309.1 L217.2 326.3 L218.2 349.5 L220.2 353.3 L222.8 351.2 L224.5 351.6 L226.2 355.5 L228.0 354.6 L230.6 352.5 L231.9 352.7 L234.0 355.5 L236.2 352.5 L237.5 353.8 L239.6 350.3 L241.4 362.4 L241.8 359.4 L242.7 359.8 L246.6 354.6 L247.9 356.4 L251.3 359.4 L253.5 354.6 L255.7 357.2 L259.1 353.3 L260.4 353.8 L263.0 360.3 L265.2 357.2 L267.4 355.5 L270.0 361.1 L272.1 359.8 L273.8 360.7 L277.7 362.4 L279.5 359.8 L281.6 363.3 L284.7 360.3 L286.4 360.7 L288.1 363.3 L289.4 359.8 L291.6 362.4 L294.5 360.4 L295.6 365.0 L297.6 370.5 L299.6 362.4 L301.1 368.5 L305.2 361.4 L307.7 367.5 L309.2 369.5 L312.2 362.9 L314.7 365.5 L316.3 363.4 L318.8 370.5 L322.3 366.5 L323.8 372.5 L324.8 367.5 L325.4 333.1 L326.4 326.0 L326.9 340.0 L327.4 358.4 L327.9 370.5 L328.4 375.0 L330.4 370.5 L333.4 369.5 L335.5 367.5 L338.5 374.0 L342.0 377.6 L344.5 371.5 L348.6 375.0 L350.6 379.6 L352.6 373.5 L355.2 376.6 L357.2 378.6 L360.7 377.0 L363.7 381.0 L365.3 375.6 L368.3 381.0 L370.0 377.6 L371.7 378.8 L371.1 380.3 L372.1 377.9 L372.5 379.1 L373.1 381.9 L373.1 380.3 L374.1 377.1 L374.2 381.8 L375.6 377.3 L375.4 377.2 L376.9 381.2 L376.3 380.5 L377.3 381.5 L377.8 381.7 L378.6 382.3 L378.4 383.6 L379.1 380.8 L379.2 381.2 L380.3 380.9 L380.6 379.9 L381.8 380.5 L381.7 382.4 L382.5 382.3 L382.9 384.9 L384.0 382.3 L383.1 381.0 L384.2 380.1 L384.5 384.4 L385.5 386.0 L385.5 383.2 L385.5 386.0 L386.5 380.9 L386.5 380.9 L386.5 384.5 L387.5 382.7 L387.5 381.3 L387.5 382.7 L388.5 382.8 L388.5 380.1 L388.5 386.5 L389.5 381.4 L389.5 381.4 L389.5 387.1 L390.5 385.5 L390.5 379.8 L390.5 385.5 L391.5 385.3 L391.5 382.6 L391.5 385.3 L392.5 386.9 L392.5 385.2 L392.5 387.1 L393.5 385.6 L393.5 385.6 L393.5 388.4 L394.5 386.7 L394.5 386.5 L394.5 386.7 L395.5 382.8 L395.5 382.8 L395.5 388.3 L396.5 387.0 L396.5 382.4 L396.5 387.0 L397.5 387.9 L397.5 382.9 L397.5 387.9 L398.5 388.6 L398.5 384.1 L398.5 389.8 L399.5 387.9 L399.5 386.5 L399.5 387.9 L400.5 388.3 L400.5 387.2 L400.5 389.4 L401.5 386.0 L401.5 386.0 L401.5 389.4 L402.5 387.5 L402.5 385.9 L402.5 389.4 L403.5 390.7 L403.5 385.2 L403.5 390.7 L404.5 387.7 L404.5 387.4 L404.5 387.7 L405.5 391.0 L405.5 386.3 L405.5 391.0 L406.5 386.1 L406.5 386.1 L406.5 389.7 L407.5 390.9 L407.5 389.3 L407.5 390.9 L408.5 389.1 L408.5 389.1 L408.5 390.0 L409.5 388.7 L409.5 388.7 L409.5 390.2 L410.5 389.3 L410.5 389.3 L410.5 390.8 L411.5 393.6 L411.5 388.7 L411.5 393.6 L412.5 389.0 L412.5 389.0 L412.5 391.6 L413.5 389.3 L413.5 389.3 L413.5 393.7 L414.5 385.5 L414.5 385.5 L414.5 390.7 L415.5 391.2 L415.5 389.6 L415.5 391.2 L416.5 392.0 L416.5 389.7 L416.5 392.0 L417.5 395.9 L417.5 389.8 L417.5 395.9 L418.5 390.9 L418.5 390.6 L418.5 390.9 L419.5 386.4 L419.5 386.4 L419.5 393.4 L420.5 389.4 L420.5 389.4 L420.5 393.5 L421.5 393.5 L421.5 388.7 L421.5 394.8 L422.5 391.3 L422.5 391.3 L422.5 393.2 L423.5 394.4 L423.5 387.3 L423.5 394.4 L424.5 389.8 L424.5 389.7 L424.5 393.8 L425.5 393.0 L425.5 392.4 L425.5 395.1 L426.5 393.2 L426.5 393.1 L426.5 394.5 L427.5 392.9 L427.5 392.9 L427.5 396.2 L428.5 392.8 L428.5 391.2 L428.5 399.0 L429.5 395.4 L429.5 393.0 L429.5 395.4 L430.5 395.2 L430.5 394.2 L430.5 395.2 L431.5 391.2 L431.5 391.2 L431.5 395.2 L432.5 392.5 L432.5 391.6 L432.5 392.5 L433.5 397.0 L433.5 396.0 L433.5 397.5 L434.5 393.0 L434.5 392.6 L434.5 394.7 L435.5 396.5 L435.5 393.3 L435.5 398.2 L436.5 398.3 L436.5 394.8 L436.5 398.3 L437.5 391.8 L437.5 391.8 L437.5 398.2 L438.5 394.5 L438.5 394.5 L438.5 396.4 L439.5 398.9 L439.5 393.9 L439.5 398.9 L440.5 399.0 L440.5 394.7 L440.5 399.0 L441.5 396.5 L441.5 395.8 L441.5 399.2 L442.5 392.3 L442.5 392.3 L442.5 398.2 L443.5 397.4 L443.5 395.6 L443.5 398.4 L444.5 397.1 L444.5 396.8 L444.5 399.7 L445.5 400.3 L445.5 396.0 L445.5 400.5 L446.5 394.0 L446.5 393.9 L446.5 399.6 L447.5 395.4 L447.5 395.4 L447.5 397.6 L448.5 396.8 L448.5 396.8 L448.5 401.6 L449.5 399.2 L449.5 395.8 L449.5 400.2 L450.5 397.3 L450.5 395.4 L450.5 400.6 L451.5 400.7 L451.5 398.6 L451.5 400.7 L452.5 399.1 L452.5 396.0 L452.5 399.1 L453.5 400.9 L453.5 397.4 L453.5 400.9 L454.5 396.5 L454.5 396.5 L454.5 400.0 L455.5 395.3 L455.5 395.3 L455.5 400.2 L456.5 401.2 L456.5 395.7 L456.5 401.2 L457.5 400.6 L457.5 399.1 L457.5 401.6 L458.5 401.6 L458.5 400.9 L458.5 403.0 L459.5 401.4 L459.5 396.7 L459.5 403.1 L460.5 400.1 L460.5 397.5 L460.5 404.7 L461.5 401.9 L461.5 399.2 L461.5 405.9 L462.5 405.0 L462.5 400.9 L462.5 405.0 L463.5 399.7 L463.5 399.7 L463.5 403.1 L464.5 401.5 L464.5 399.8 L464.5 401.5 L465.5 403.7 L465.5 400.3 L465.5 403.7 L466.5 407.6 L466.5 397.4 L466.5 407.6 L467.5 403.6 L467.5 403.2 L467.5 405.8 L468.5 402.4 L468.5 399.0 L468.5 404.7 L469.5 403.4 L469.5 401.5 L469.5 406.5 L470.5 400.5 L470.5 400.5 L470.5 403.6 L471.5 402.5 L471.5 401.5 L471.5 407.6 L472.5 401.3 L472.5 401.0 L472.5 407.0 L473.5 407.5 L473.5 402.1 L473.5 407.5 L474.5 400.0 L474.5 400.0 L474.5 405.0 L475.5 402.9 L475.5 402.9 L475.5 405.1 L476.5 405.7 L476.5 403.8 L476.5 406.0 L477.5 404.7 L477.5 403.1 L477.5 404.7 L478.5 404.7 L478.5 404.7 L478.5 405.2 L479.5 404.9 L479.5 402.8 L479.5 407.3 L480.5 405.0 L480.5 401.9 L480.5 406.3 L481.5 403.9 L481.5 400.8 L481.5 407.1 L482.5 409.1 L482.5 403.3 L482.5 409.1 L483.5 407.1 L483.5 406.0 L483.5 409.1 L484.5 407.5 L484.5 404.3 L484.5 409.7 L485.5 406.2 L485.5 406.0 L485.5 408.7 L486.5 408.6 L486.5 406.3 L486.5 412.0 L487.5 407.2 L487.5 406.3 L487.5 412.3 L488.5 407.2 L488.5 405.1 L488.5 409.5 L489.5 409.1 L489.5 407.5 L489.5 409.2 L490.5 407.8 L490.5 405.8 L490.5 409.1 L491.5 407.9 L491.5 404.3 L491.5 407.9 L492.5 409.3 L492.5 405.6 L492.5 409.3 L493.5 412.2 L493.5 406.8 L493.5 412.2 L494.5 405.3 L494.5 405.2 L494.5 410.5 L495.5 410.1 L495.5 405.5 L495.5 410.1 L496.5 406.5 L496.5 406.5 L496.5 410.5 L497.5 412.4 L497.5 406.9 L497.5 412.4 L498.5 407.6 L498.5 406.7 L498.5 410.5 L499.5 407.5 L499.5 407.5 L499.5 409.7 L500.5 408.6 L500.5 408.6 L500.5 411.5 L501.5 409.8 L501.5 405.3 L501.5 410.2 L502.5 410.7 L502.5 407.8 L502.5 410.7 L503.5 411.4 L503.5 408.9 L503.5 411.7 L504.5 410.5 L504.5 408.2 L504.5 412.1 L505.5 410.1 L505.5 408.7 L505.5 410.5 L506.5 411.1 L506.5 410.2 L506.5 415.7 L507.5 413.3 L507.5 406.8 L507.5 413.4 L508.5 411.7 L508.5 411.7 L508.5 416.0 L509.5 412.9 L509.5 411.1 L509.5 413.3 L510.5 409.6 L510.5 409.6 L510.5 415.9 L511.5 411.2 L511.5 410.2 L511.5 414.1 L512.5 413.0 L512.5 410.4 L512.5 415.4 L513.5 412.5 L513.5 410.7 L513.5 414.9 L514.5 410.9 L514.5 410.9 L514.5 414.9 L515.5 412.2 L515.5 411.3 L515.5 417.0 L516.5 412.4 L516.5 409.3 L516.5 416.1 L517.5 415.4 L517.5 409.6 L517.5 415.4 L518.5 412.6 L518.5 410.1 L518.5 412.7 L519.5 412.7 L519.5 411.2 L519.5 413.8 L520.5 412.1 L520.5 411.7 L520.5 416.2 L521.5 411.5 L521.5 411.5 L521.5 417.5 L522.5 412.0 L522.5 409.9 L522.5 419.1 L523.5 413.8 L523.5 413.0 L523.5 415.0 L524.5 410.2 L524.5 410.2 L524.5 414.9 L525.5 412.6 L525.5 412.6 L525.5 415.3 L526.5 411.4 L526.5 411.4 L526.5 415.5 L527.5 412.5 L527.5 412.5 L527.5 417.9 L528.5 417.4 L528.5 413.0 L528.5 417.4 L529.5 411.2 L529.5 411.2 L529.5 417.3 L530.5 415.4 L530.5 411.8 L530.5 417.6 L531.5 412.9 L531.5 412.3 L531.5 418.2 L532.5 415.5 L532.5 413.8 L532.5 419.6 L533.5 413.4 L533.5 412.8 L533.5 415.8 L534.5 414.5 L534.5 414.5 L534.5 417.6 L535.5 418.5 L535.5 414.3 L535.5 418.5 L536.5 419.0 L536.5 413.2 L536.5 419.0 L537.5 414.9 L537.5 412.6 L537.5 416.9 L538.5 418.2 L538.5 413.5 L538.5 418.2 L539.5 418.4 L539.5 415.4 L539.5 420.0 L540.5 421.7 L540.5 413.1 L540.5 421.7 L541.5 418.3 L541.5 417.5 L541.5 422.5 L542.5 418.1 L542.5 411.1 L542.5 420.7 L543.5 419.4 L543.5 416.0 L543.5 422.0 L544.5 419.1 L544.5 417.5 L544.5 419.7 L545.5 419.4 L545.5 415.9 L545.5 421.0 L546.5 418.9 L546.5 415.4 L546.5 421.6 L547.5 415.7 L547.5 415.7 L547.5 420.5 L548.5 418.0 L548.5 414.8 L548.5 421.5 L549.5 418.7 L549.5 418.3 L549.5 422.4 L550.5 417.9 L550.5 417.9 L550.5 424.1 L551.5 418.4 L551.5 417.5 L551.5 420.6 L552.5 416.8 L552.5 416.8 L552.5 421.4 L553.5 420.0 L553.5 419.2 L553.5 423.1 L554.5 420.7 L554.5 416.5 L554.5 425.3 L555.5 422.3 L555.5 418.4 L555.5 422.5 L556.5 418.7 L556.5 417.1 L556.5 421.5 L557.5 419.2 L557.5 419.2 L557.5 423.3 L558.5 424.6 L558.5 416.6 L558.5 425.0 L559.5 422.3 L559.5 418.0 L559.5 423.7 L560.5 418.1 L560.5 418.1 L560.5 424.2 L561.5 420.9 L561.5 419.6 L561.5 425.3 L562.5 420.4 L562.5 420.4 L562.5 424.6 L563.5 421.0 L563.5 420.9 L563.5 423.8 L564.5 419.9 L564.5 419.9 L564.5 423.8 L565.5 425.1 L565.5 420.7 L565.5 427.2 L566.5 424.2 L566.5 417.8 L566.5 427.2 L567.5 422.8 L567.5 419.5 L567.5 425.3 L568.5 423.1 L568.5 419.7 L568.5 425.3 L569.5 424.3 L569.5 418.4 L569.5 424.9 L570.5 424.2 L570.5 421.4 L570.5 428.6 L571.5 421.8 L571.5 420.3 L571.5 425.6 L572.5 422.4 L572.5 421.6 L572.5 425.6 L573.5 419.7 L573.5 419.7 L573.5 426.3 L574.5 422.4 L574.5 421.3 L574.5 425.2 L575.5 424.7 L575.5 420.7 L575.5 426.9 L576.5 424.5 L576.5 423.2 L576.5 426.1 L577.5 424.2 L577.5 421.0 L577.5 424.2 L578.5 424.4 L578.5 419.5 L578.5 429.0 L579.5 430.4 L579.5 419.8 L579.5 430.4 L580.5 425.6 L580.5 420.5 L580.5 426.2 L581.5 425.4 L581.5 423.2 L581.5 429.3 L582.5 421.4 L582.5 421.4 L582.5 428.5 L583.5 421.7 L583.5 421.7 L583.5 430.8 L584.5 425.2 L584.5 423.3 L584.5 428.3 L585.5 422.0 L585.5 421.3 L585.5 426.8 L586.5 424.3 L586.5 421.6 L586.5 427.8 L587.5 427.5 L587.5 424.3 L587.5 429.4 L588.5 430.0 L588.5 423.6 L588.5 430.0 L589.5 429.4 L589.5 424.5 L589.5 429.6 L590.5 431.3 L590.5 425.2 L590.5 431.3 L591.5 427.7 L591.5 423.7 L591.5 429.5 L592.5 428.5 L592.5 423.6 L592.5 431.3 L593.5 426.7 L593.5 424.7 L593.5 430.1 L594.5 423.4 L594.5 423.4 L594.5 430.3 L595.5 428.8 L595.5 422.4 L595.5 428.9 L596.5 425.6 L596.5 422.6 L596.5 432.4 L597.5 423.7 L597.5 423.7 L597.5 428.9 L598.5 430.8 L598.5 427.1 L598.5 432.2 L599.5 428.0 L599.5 424.7 L599.5 431.1 L600.5 424.1 L600.5 424.1 L600.5 432.8 L601.5 425.1 L601.5 425.1 L601.5 429.0 L602.5 430.5 L602.5 427.1 L602.5 431.9 L603.5 426.1 L603.5 425.2 L603.5 431.4 L604.5 427.9 L604.5 422.9 L604.5 431.3 L605.5 428.9 L605.5 426.5 L605.5 434.3 L606.5 426.5 L606.5 425.4 L606.5 432.5 L607.5 430.4 L607.5 425.9 L607.5 431.3 L608.5 432.5 L608.5 425.7 L608.5 432.5 L609.5 433.1 L609.5 426.4 L609.5 433.1 L610.5 428.4 L610.5 425.6 L610.5 431.5 L611.5 429.4 L611.5 428.9 L611.5 434.5 L612.5 429.3 L612.5 426.7 L612.5 432.9 L613.5 432.3 L613.5 427.0 L613.5 432.4 L614.5 428.7 L614.5 425.7 L614.5 432.1 L615.5 428.6 L615.5 426.8 L615.5 433.2 L616.5 431.5 L616.5 424.5 L616.5 433.5 L617.5 433.3 L617.5 427.1 L617.5 434.0 L618.5 430.3 L618.5 426.2 L618.5 435.6 L619.5 430.2 L619.5 427.8 L619.5 433.2 L620.5 434.8 L620.5 428.0 L620.5 435.1 L621.5 428.2 L621.5 427.4 L621.5 437.2 L622.5 430.7 L622.5 429.3 L622.5 435.0 L623.5 430.9 L623.5 428.5 L623.5 435.6 L624.5 433.0 L624.5 429.3 L624.5 437.4 L625.5 432.6 L625.5 428.6 L625.5 436.1 L626.5 429.3 L626.5 427.5 L626.5 435.3 L627.5 430.2 L627.5 427.6 L627.5 433.1 L628.5 430.9 L628.5 428.3 L628.5 436.7 L629.5 429.7 L629.5 427.5 L629.5 438.3 L630.5 429.2 L630.5 428.5 L630.5 436.5 L631.5 430.7 L631.5 426.4 L631.5 434.3 L632.5 435.7 L632.5 429.6 L632.5 436.4 L633.5 431.2 L633.5 429.4 L633.5 435.6 L634.5 430.6 L634.5 427.9 L634.5 434.7 L635.5 432.2 L635.5 428.9 L635.5 436.0 L636.5 430.3 L636.5 428.7 L636.5 435.9 L637.5 432.0 L637.5 432.0 L637.5 438.0 L638.5 431.7 L638.5 428.3 L638.5 437.5 L639.5 434.9 L639.5 432.1 L639.5 440.1 L640.5 438.0 L640.5 430.5 L640.5 438.0 L641.5 432.0 L641.5 429.7 L641.5 440.2 L642.5 438.7 L642.5 429.6 L642.5 438.7 L643.5 434.0 L643.5 429.7 L643.5 438.8 L644.5 432.2 L644.5 429.6 L644.5 438.3 L645.5 434.7 L645.5 430.0 L645.5 438.7 L646.5 431.4 L646.5 431.4 L646.5 438.1 L647.5 434.5 L647.5 432.6 L647.5 442.4 L648.5 433.1 L648.5 429.4 L648.5 439.0 L649.5 435.3 L649.5 429.5 L649.5 439.7 L650.5 431.3 L650.5 430.5 L650.5 443.0 L651.5 432.3 L651.5 429.7 L651.5 436.5 L652.5 432.0 L652.5 432.0 L652.5 437.1 L653.5 433.9 L653.5 431.8 L653.5 441.4 L654.5 436.2 L654.5 432.6 L654.5 439.7 L655.5 437.3 L655.5 433.5 L655.5 441.1 L656.5 436.0 L656.5 431.1 L656.5 441.8 L657.5 435.8 L657.5 433.4 L657.5 438.4 L658.5 440.1 L658.5 433.1 L658.5 440.1 L659.5 437.0 L659.5 432.2 L659.5 439.0 L660.5 434.9 L660.5 433.6 L660.5 440.8 L661.5 432.1 L661.5 432.1 L661.5 441.3 L662.5 436.1 L662.5 434.0 L662.5 441.3 L663.5 435.5 L663.5 432.7 L663.5 439.4 L664.5 439.4 L664.5 431.9 L664.5 440.5 L665.5 439.2 L665.5 430.8 L665.5 442.8 L666.5 436.1 L666.5 432.5 L666.5 441.4 L667.5 435.6 L667.5 432.0 L667.5 440.6 L668.5 440.2 L668.5 435.9 L668.5 440.2 L669.5 434.6 L669.5 434.3 L669.5 441.2 L670.5 439.9 L670.5 434.9 L670.5 445.0 L671.5 438.5 L671.5 434.0 L671.5 441.7 L672.5 437.4 L672.5 431.7 L672.5 438.8 L673.5 436.7 L673.5 433.2 L673.5 439.9 L674.5 435.4 L674.5 433.4 L674.5 440.7 L675.5 440.6 L675.5 430.0 L675.5 442.0 L676.5 443.3 L676.5 433.9 L676.5 443.3 L677.5 437.4 L677.5 431.9 L677.5 443.1 L678.5 438.2 L678.5 433.9 L678.5 445.1 L679.5 435.9 L679.5 430.8 L679.5 442.3 L680.5 439.6 L680.5 434.4 L680.5 443.2 L681.5 437.7 L681.5 433.7 L681.5 444.0 L682.5 437.0 L682.5 433.2 L682.5 443.9 L683.5 440.3 L683.5 436.7 L683.5 442.5 L684.5 439.8 L684.5 434.9 L684.5 442.5 L685.5 443.9 L685.5 437.4 L685.5 445.5 L686.5 436.5 L686.5 436.5 L686.5 443.9 L687.5 441.8 L687.5 436.4 L687.5 443.4 L688.5 438.5 L688.5 435.9 L688.5 443.9 L689.5 441.2 L689.5 436.2 L689.5 442.1 L690.5 439.6 L690.5 435.5 L690.5 445.5 L691.5 441.0 L691.5 435.6 L691.5 443.8 L692.5 438.8 L692.5 436.1 L692.5 443.7 L693.5 442.1 L693.5 436.4 L693.5 445.4 L694.5 440.8 L694.5 436.0 L694.5 444.2 L695.5 440.6 L695.5 436.5 L695.5 444.8 L696.5 439.1 L696.5 436.2 L696.5 445.0 L697.5 438.8 L697.5 437.4 L697.5 445.9 L698.5 440.3 L698.5 435.1 L698.5 444.6 L699.5 440.7 L699.5 437.2 L699.5 446.6 L700.5 436.3 L700.5 436.3 L700.5 445.6 L701.5 438.8 L701.5 438.6 L701.5 445.1 L702.5 440.8 L702.5 436.9 L702.5 445.3 L703.5 441.0 L703.5 440.0 L703.5 445.2 L704.5 438.9 L704.5 435.7 L704.5 445.9 L705.5 440.5 L705.5 437.4 L705.5 445.9 L706.5 445.3 L706.5 436.7 L706.5 445.8 L707.5 440.1 L707.5 438.5 L707.5 446.9 L708.5 441.6 L708.5 435.0 L708.5 444.9 L709.5 444.7 L709.5 437.1 L709.5 445.8 L710.5 442.5 L710.5 438.6 L710.5 448.7 L711.5 441.2 L711.5 435.7 L711.5 445.2 L712.5 442.3 L712.5 435.9 L712.5 443.7 L713.5 444.8 L713.5 439.5 L713.5 445.7 L714.5 442.0 L714.5 438.7 L714.5 444.9 L715.5 440.7 L715.5 435.7 L715.5 443.8 L716.5 441.9 L716.5 436.8 L716.5 445.1 L717.5 441.7 L717.5 437.7 L717.5 447.2 L718.5 444.1 L718.5 437.3 L718.5 450.2 L719.5 442.7 L719.5 436.5 L719.5 448.0 L720.5 442.6 L720.5 437.6 L720.5 447.2 L721.5 450.3 L721.5 440.4 L721.5 450.3 L722.5 439.8 L722.5 436.3 L722.5 445.4 L723.5 437.0 L723.5 437.0 L723.5 446.0 L724.5 440.6 L724.5 436.2 L724.5 448.9 L725.5 440.5 L725.5 438.9 L725.5 448.3 L726.5 443.5 L726.5 436.4 L726.5 448.1 L727.5 438.6 L727.5 438.6 L727.5 445.9 L728.5 439.7 L728.5 439.3 L728.5 446.8 L729.5 440.4 L729.5 438.0 L729.5 446.4 L730.5 441.0 L730.5 438.9 L730.5 447.2 L731.5 440.2 L731.5 439.8 L731.5 450.8 L732.5 444.2 L732.5 440.4 L732.5 447.6 L733.5 442.1 L733.5 437.9 L733.5 447.0 L734.5 442.6 L734.5 437.6 L734.5 448.8 L735.5 441.4 L735.5 437.0 L735.5 446.4 L736.5 442.2 L736.5 438.6 L736.5 451.0 L737.5 438.4 L737.5 438.4 L737.5 448.5 L738.5 445.5 L738.5 440.5 L738.5 448.8 L739.5 441.2 L739.5 438.5 L739.5 449.7 L740.5 443.2 L740.5 440.1 L740.5 447.0 L741.5 442.7 L741.5 438.6 L741.5 449.8 L742.5 440.2 L742.5 438.8 L742.5 447.4 L743.5 443.3 L743.5 438.6 L743.5 448.7 L744.5 446.7 L744.5 440.2 L744.5 447.8 L745.5 446.5 L745.5 439.7 L745.5 449.4 L746.5 445.2 L746.5 438.4 L746.5 448.1 L747.5 449.3 L747.5 440.2 L747.5 449.3 L748.5 442.0 L748.5 439.6 L748.5 448.6 L749.5 443.3 L749.5 439.8 L749.5 450.6 L750.5 441.4 L750.5 440.5 L750.5 449.0 L751.5 445.8 L751.5 439.3 L751.5 449.0 L752.5 444.0 L752.5 439.8 L752.5 449.1 L753.5 440.7 L753.5 438.5 L753.5 448.9 L754.5 445.3 L754.5 441.1 L754.5 449.4 L755.5 448.9 L755.5 440.8 L755.5 448.9 L756.5 448.5 L756.5 440.6 L756.5 449.8 L757.5 446.8 L757.5 437.3 L757.5 450.0 L758.5 445.0 L758.5 440.7 L758.5 447.7 L759.5 441.9 L759.5 440.1 L759.5 452.0 L760.5 445.4 L760.5 442.9 L760.5 450.4 L761.5 448.9 L761.5 440.3 L761.5 449.5 L762.5 443.9 L762.5 439.4 L762.5 446.4 L763.5 448.7 L763.5 438.1 L763.5 450.1 L764.5 447.1 L764.5 438.8 L764.5 448.9 L765.5 446.0 L765.5 437.6 L765.5 450.0 L766.5 445.4 L766.5 441.2 L766.5 448.9 L767.5 443.6 L767.5 441.9 L767.5 449.6 L768.5 443.4 L768.5 440.8 L768.5 449.2 L769.5 444.9 L769.5 440.3 L769.5 449.2 L770.5 442.7 L770.5 441.7 L770.5 448.7 L771.5 445.1 L771.5 437.5 L771.5 451.0 L772.5 445.6 L772.5 441.3 L772.5 451.3 L773.5 443.4 L773.5 440.0 L773.5 450.2 L774.5 446.4 L774.5 441.0 L774.5 449.7 L775.5 444.3 L775.5 439.8 L775.5 448.4 L776.5 440.7 L776.5 439.0 L776.5 449.7 L777.5 448.9 L777.5 442.2 L777.5 449.4 L778.5 444.0 L778.5 440.8 L778.5 449.0 L779.5 442.6 L779.5 439.1 L779.5 449.8 L780.5 442.7 L780.5 441.0 L780.5 450.6 L781.5 443.5 L781.5 442.4 L781.5 450.5 L782.5 449.4 L782.5 439.2 L782.5 451.2 L783.5 449.4 L783.5 438.3 L783.5 450.9 L784.5 443.9 L784.5 440.4 L784.5 450.1 L785.5 444.9 L785.5 439.6 L785.5 450.0 L786.5 445.8 L786.5 439.9 L786.5 451.2 L787.5 445.5 L787.5 439.7 L787.5 450.4 L788.5 441.3 L788.5 439.0 L788.5 450.1 L789.5 447.4 L789.5 439.4 L789.5 449.4 L790.5 445.0 L790.5 439.5 L790.5 450.5 L791.5 449.4 L791.5 441.5 L791.5 450.6 L792.5 442.2 L792.5 439.8 L792.5 450.8 L793.5 447.1 L793.5 441.4 L793.5 453.7 L794.5 450.0 L794.5 440.3 L794.5 451.1 L795.5 448.9 L795.5 440.8 L795.5 454.0 L796.5 440.7 L796.5 440.7 L796.5 450.4 L797.5 448.2 L797.5 441.2 L797.5 451.1 L798.5 442.7 L798.5 441.7 L798.5 452.6 L799.5 443.5 L799.5 440.6 L799.5 452.5 L800.5 444.9 L800.5 439.7 L800.5 453.5 L801.5 442.8 L801.5 440.0 L801.5 448.7 L802.5 445.5 L802.5 438.7 L802.5 449.0 L803.5 444.6 L803.5 439.9 L803.5 451.4 L804.5 446.3 L804.5 442.3 L804.5 452.7 L805.5 446.6 L805.5 441.4 L805.5 451.6 L806.5 449.0 L806.5 440.3 L806.5 452.1 L807.5 446.2 L807.5 441.7 L807.5 451.5 L808.5 443.0 L808.5 438.9 L808.5 451.4 L809.5 446.0 L809.5 438.9 L809.5 450.9 L810.5 443.7 L810.5 441.5 L810.5 450.3 L811.5 443.7 L811.5 441.7 L811.5 452.2 L812.5 441.7 L812.5 441.7 L812.5 451.6 L813.5 443.3 L813.5 441.1 L813.5 452.0 L814.5 444.0 L814.5 442.0 L814.5 451.0 L815.5 445.2 L815.5 441.4 L815.5 451.9 L816.5 443.0 L816.5 441.3 L816.5 451.6 L817.5 442.6 L817.5 441.9 L817.5 451.5 L818.5 444.9 L818.5 441.1 L818.5 451.1 L819.5 447.1 L819.5 442.2 L819.5 449.9 L820.5 444.3 L820.5 442.3 L820.5 452.3 L821.5 447.8 L821.5 441.8 L821.5 452.0 L822.5 444.6 L822.5 443.6 L822.5 451.5 L823.5 442.7 L823.5 440.9 L823.5 450.3 L824.5 444.0 L824.5 440.4 L824.5 454.6 L825.5 445.8 L825.5 441.2 L825.5 452.0 L826.5 443.3 L826.5 440.1 L826.5 450.5 L827.5 440.7 L827.5 440.7 L827.5 452.3 L828.5 444.5 L828.5 442.2 L828.5 450.8 L829.5 445.5 L829.5 441.0 L829.5 451.7 L830.5 451.1 L830.5 441.9 L830.5 451.1 L831.5 448.5 L831.5 440.2 L831.5 451.8 L832.5 444.7 L832.5 442.5 L832.5 451.3 L833.5 444.1 L833.5 442.6 L833.5 451.8 L834.5 448.3 L834.5 441.9 L834.5 452.6 L835.5 451.3 L835.5 440.5 L835.5 452.1 L836.5 447.1 L836.5 442.2 L836.5 452.7 L837.5 446.8 L837.5 441.7 L837.5 455.1 L838.5 445.9 L838.5 442.6 L838.5 450.5 L839.5 447.6 L839.5 442.6 L839.5 451.2 L840.5 445.8 L840.5 441.8 L840.5 452.6 L841.5 447.9 L841.5 441.6 L841.5 453.8 L842.5 442.1 L842.5 440.6 L842.5 453.1 L843.5 446.6 L843.5 442.7 L843.5 452.0 L844.5 447.5 L844.5 442.2 L844.5 452.1 L845.5 444.1 L845.5 441.0 L845.5 453.4 L846.5 446.2 L846.5 443.2 L846.5 452.7 L847.5 444.2 L847.5 440.3 L847.5 453.8 L848.5 445.6 L848.5 440.5 L848.5 452.8 L849.5 451.9 L849.5 441.5 L849.5 451.9 L850.5 449.2 L850.5 442.1 L850.5 451.0 L851.5 450.2 L851.5 440.5 L851.5 453.7 L852.5 444.7 L852.5 441.2 L852.5 450.4 L853.5 445.5 L853.5 442.1 L853.5 451.9 L854.5 446.9 L854.5 443.2 L854.5 452.2 L855.5 447.1 L855.5 441.5 L855.5 451.4 L856.5 454.1 L856.5 441.6 L856.5 457.0 L857.5 448.0 L857.5 442.1 L857.5 453.8 L858.5 452.0 L858.5 441.4 L858.5 453.4 L859.5 447.9 L859.5 442.9 L859.5 452.6 L860.5 447.2 L860.5 441.5 L860.5 452.8 L861.5 444.9 L861.5 442.7 L861.5 452.7 L862.5 448.2 L862.5 442.4 L862.5 452.3 L863.5 451.1 L863.5 443.0 L863.5 456.1 L864.5 449.4 L864.5 441.9 L864.5 453.7 L865.5 444.5 L865.5 442.2 L865.5 453.5 L866.5 448.6 L866.5 444.4 L866.5 454.2 L867.5 450.3 L867.5 443.3 L867.5 454.4 L868.5 446.0 L868.5 443.7 L868.5 453.6 L869.5 449.5 L869.5 442.7 L869.5 454.3 L870.5 448.6 L870.5 443.1 L870.5 454.8 L871.5 450.5 L871.5 442.1 L871.5 454.5 L872.5 446.9 L872.5 445.1 L872.5 454.2 L873.5 446.5 L873.5 441.2 L873.5 454.3 L874.5 447.2 L874.5 443.4 L874.5 455.5 L875.5 445.9 L875.5 443.4 L875.5 454.6 L876.5 450.7 L876.5 443.7 L876.5 453.4 L877.5 452.1 L877.5 443.6 L877.5 453.6 L878.5 450.0 L878.5 443.6 L878.5 453.4 L879.5 447.4 L879.5 443.1 L879.5 455.0 L880.5 449.9 L880.5 443.0 L880.5 454.6 L881.5 451.2 L881.5 442.2 L881.5 454.9 L882.5 445.9 L882.5 444.6 L882.5 455.9 L883.5 447.0 L883.5 443.5 L883.5 455.7 L884.5 449.8 L884.5 444.0 L884.5 456.2 L885.5 447.7 L885.5 443.0 L885.5 455.0 L886.5 450.7 L886.5 444.5 L886.5 455.9 L887.5 444.8 L887.5 440.7 L887.5 457.6 L888.5 445.4 L888.5 442.7 L888.5 453.2 L889.5 451.0 L889.5 444.2 L889.5 456.3 L890.5 452.2 L890.5 443.6 L890.5 454.5 L891.5 446.8 L891.5 443.5 L891.5 453.9 L892.5 452.3 L892.5 443.7 L892.5 455.3 L893.5 443.2 L893.5 442.6 L893.5 455.0 L894.5 447.5 L894.5 443.8 L894.5 457.1 L895.5 447.4 L895.5 442.6 L895.5 454.7 L896.5 451.2 L896.5 443.8 L896.5 456.0 L897.5 449.4 L897.5 444.7 L897.5 454.7 L898.5 444.5 L898.5 444.5 L898.5 454.4 L899.5 447.8 L899.5 445.2 L899.5 456.9 L900.5 449.7 L900.5 444.8 L900.5 454.2 L901.5 450.7 L901.5 444.6 L901.5 454.6 L902.5 446.7 L902.5 442.7 L902.5 457.2 L903.5 456.8 L903.5 444.8 L903.5 456.8 L904.5 452.7 L904.5 445.1 L904.5 455.6 L905.5 449.1 L905.5 444.2 L905.5 454.6 L906.5 445.9 L906.5 444.7 L906.5 456.3 L907.5 449.5 L907.5 445.4 L907.5 456.4 L908.5 446.5 L908.5 443.8 L908.5 456.0 L909.5 450.7 L909.5 443.2 L909.5 454.7 L910.5 453.2 L910.5 444.7 L910.5 456.7 L911.5 450.2 L911.5 444.5 L911.5 456.2 L912.5 448.7 L912.5 443.6 L912.5 455.9 L913.5 449.4 L913.5 444.3 L913.5 455.9 L914.5 456.1 L914.5 444.7 L914.5 456.2 L915.5 448.2 L915.5 446.0 L915.5 456.8 L916.5 454.5 L916.5 443.0 L916.5 457.6 L917.5 449.1 L917.5 443.7 L917.5 455.2 L918.5 452.8 L918.5 445.0 L918.5 458.2 L919.5 448.5 L919.5 445.9 L919.5 458.1 L920.5 450.1 L920.5 445.5 L920.5 455.9 L921.5 451.5 L921.5 444.7 L921.5 456.8 L922.5 448.5 L922.5 446.0 L922.5 455.8 L923.5 450.4 L923.5 445.7 L923.5 456.3 L924.5 452.1 L924.5 445.6 L924.5 455.7 L925.5 451.6 L925.5 445.4 L925.5 459.4 L926.5 448.0 L926.5 445.8 L926.5 456.4 L927.5 445.4 L927.5 443.9 L927.5 457.3 L928.5 452.7 L928.5 446.4 L928.5 460.1 L929.5 453.8 L929.5 445.6 L929.5 457.8 L930.5 453.9 L930.5 446.0 L930.5 457.3 L931.5 452.1 L931.5 445.2 L931.5 458.6 L932.5 453.2 L932.5 446.3 L932.5 455.5 L933.5 454.5 L933.5 443.8 L933.5 460.5 L934.5 455.3 L934.5 446.0 L934.5 457.9 L935.5 450.8 L935.5 444.9 L935.5 458.0 L936.5 450.9 L936.5 444.9 L936.5 460.4 L937.5 450.1 L937.5 446.5 L937.5 459.4 L938.5 451.1 L938.5 446.0 L938.5 458.2 L939.5 454.0 L939.5 444.2 L939.5 459.1 L940.5 452.2 L940.5 443.9 L940.5 455.7 L941.5 448.6 L941.5 445.3 L941.5 456.8 L942.5 448.6 L942.5 446.6 L942.5 457.0 L943.5 451.2 L943.5 446.2 L943.5 457.0 L944.5 451.5 L944.5 446.8 L944.5 456.2 L945.5 449.1 L945.5 446.1 L945.5 458.3 L946.5 450.6 L946.5 446.6 L946.5 458.1 L947.5 453.2 L947.5 445.2 L947.5 457.8 L948.5 450.7 L948.5 445.5 L948.5 458.9 L949.5 450.5 L949.5 444.8 L949.5 456.8 L950.5 453.2 L950.5 446.0 L950.5 457.5 L951.5 447.4 L951.5 446.7 L951.5 456.7 L952.5 450.3 L952.5 445.4 L952.5 456.8 L953.5 454.9 L953.5 445.7 L953.5 457.8 L954.5 453.3 L954.5 445.8 L954.5 457.3 L955.5 450.0 L955.5 445.3 L955.5 456.9 L956.5 451.1 L956.5 446.7 L956.5 457.3 L957.5 455.6 L957.5 446.4 L957.5 459.4 L958.5 452.0 L958.5 446.9 L958.5 461.4 L959.5 452.9 L959.5 446.2 L959.5 458.4 L960.5 452.2 L960.5 445.2 L960.5 459.5 L961.5 451.7 L961.5 446.2 L961.5 455.8 L962.5 453.5 L962.5 446.1 L962.5 459.1 L963.5 449.5 L963.5 446.8 L963.5 457.6 L964.5 451.4 L964.5 445.4 L964.5 458.2 L965.5 453.0 L965.5 446.0 L965.5 457.6 L966.5 450.3 L966.5 447.7 L966.5 457.6 L967.5 452.2 L967.5 444.7 L967.5 458.4 L968.5 448.6 L968.5 445.7 L968.5 458.3 L969.5 451.5 L969.5 443.4 L969.5 457.9 L970.5 456.0 L970.5 446.6 L970.5 458.5 L971.5 457.4 L971.5 445.5 L971.5 457.4 L972.5 454.1 L972.5 447.2 L972.5 458.4 L973.5 455.1 L973.5 446.6 L973.5 458.1 L974.5 449.8 L974.5 445.7 L974.5 458.6 L975.5 451.8 L975.5 442.1 L975.5 457.7 L976.5 449.6 L976.5 446.1 L976.5 459.6 L977.5 453.8 L977.5 444.1 L977.5 457.8 L978.5 452.2 L978.5 447.0 L978.5 459.1 L979.5 447.6 L979.5 446.4 L979.5 458.5 L980.5 453.5 L980.5 446.7 L980.5 457.8 L981.5 451.1 L981.5 445.8 L981.5 458.7 L982.5 450.8 L982.5 445.8 L982.5 457.8 L983.5 455.5 L983.5 445.8 L983.5 457.6 L984.5 452.7 L984.5 445.0 L984.5 458.1 L985.5 447.7 L985.5 444.4 L985.5 458.0 L986.5 448.9 L986.5 444.6 L986.5 459.6 L987.5 451.6 L987.5 444.5 L987.5 458.5 L988.5 451.3 L988.5 446.6 L988.5 458.4 L989.5 448.6 L989.5 445.5 L989.5 456.5 L990.5 452.7 L990.5 446.9 L990.5 458.4 L991.5 451.0 L991.5 445.9 L991.5 460.0 L992.5 452.5 L992.5 445.2 L992.5 457.3 L993.5 452.1 L993.5 446.6 L993.5 459.0 L994.5 448.0 L994.5 446.6 L994.5 460.5 L995.5 455.2 L995.5 445.4 L995.5 457.3 L996.5 449.1 L996.5 446.1 L996.5 459.5 L997.5 454.8 L997.5 446.8 L997.5 457.8 L998.5 453.7 L998.5 445.6 L998.5 458.4 L999.5 456.2 L999.5 445.3 L999.5 456.8 L1000.5 450.6 L1000.5 445.3 L1000.5 459.5 L1001.5 451.4 L1001.5 446.3 L1001.5 458.0 L1002.5 451.9 L1002.5 444.6 L1002.5 458.4 L1003.5 454.1 L1003.5 446.2 L1003.5 460.5 L1004.5 446.7 L1004.5 445.0 L1004.5 458.0 L1005.5 450.5 L1005.5 445.4 L1005.5 457.2 L1006.5 451.3 L1006.5 447.2 L1006.5 459.8 L1007.5 450.0 L1007.5 445.6 L1007.5 460.8 L1008.5 457.1 L1008.5 446.0 L1008.5 457.1 L1009.5 451.3 L1009.5 446.7 L1009.5 458.1 L1010.5 450.3 L1010.5 446.3 L1010.5 458.6 L1011.5 453.5 L1011.5 446.1 L1011.5 457.0 L1012.5 454.3 L1012.5 447.0 L1012.5 458.8 L1013.5 448.8 L1013.5 446.0 L1013.5 458.1 L1014.5 457.4 L1014.5 446.3 L1014.5 458.5 L1015.5 452.8 L1015.5 445.3 L1015.5 459.6 L1016.5 454.8 L1016.5 444.9 L1016.5 459.1 L1017.5 453.1 L1017.5 446.4 L1017.5 458.5 L1018.5 449.6 L1018.5 447.2 L1018.5 457.5 L1019.5 448.0 L1019.5 446.2 L1019.5 460.4 L1020.5 448.4 L1020.5 445.0 L1020.5 458.3 L1021.5 455.0 L1021.5 445.7 L1021.5 457.7 L1022.5 449.8 L1022.5 445.7 L1022.5 459.9 L1023.5 451.5 L1023.5 445.2 L1023.5 459.7 L1024.5 449.7 L1024.5 447.0 L1024.5 460.7 L1025.5 454.8 L1025.5 444.4 L1025.5 457.6 L1026.5 448.6 L1026.5 444.6 L1026.5 459.6 L1027.5 451.9 L1027.5 445.5 L1027.5 457.9 L1028.5 453.4 L1028.5 446.8 L1028.5 458.5 L1029.5 451.7 L1029.5 445.3 L1029.5 459.2 L1030.5 451.2 L1030.5 446.2 L1030.5 458.0 L1031.5 449.9 L1031.5 445.1 L1031.5 458.6 L1032.5 450.6 L1032.5 447.5 L1032.5 460.4 L1033.5 450.4 L1033.5 447.0 L1033.5 458.7 L1034.5 448.9 L1034.5 443.4 L1034.5 458.1 L1035.5 450.9 L1035.5 447.2 L1035.5 458.5 L1036.5 455.6 L1036.5 446.5 L1036.5 460.5 L1037.5 460.2 L1037.5 447.0 L1037.5 460.2 L1038.5 454.5 L1038.5 445.4 L1038.5 457.5 L1039.5 454.1 L1039.5 445.5 L1039.5 458.9 L1040.5 451.3 L1040.5 446.2 L1040.5 459.2 L1041.5 451.4 L1041.5 445.7 L1041.5 458.4 L1042.5 449.2 L1042.5 445.9 L1042.5 458.7 L1043.5 453.3 L1043.5 446.6 L1043.5 459.0 L1044.5 452.4 L1044.5 446.0 L1044.5 458.1 L1045.5 450.8 L1045.5 446.3 L1045.5 458.4 L1046.5 449.7 L1046.5 446.2 L1046.5 460.7 L1047.5 449.5 L1047.5 446.0 L1047.5 458.3 L1048.5 452.3 L1048.5 446.7 L1048.5 458.2 L1049.5 451.9 L1049.5 447.8 L1049.5 458.5 L1050.5 451.9 L1050.5 446.5 L1050.5 459.1 L1051.5 455.0 L1051.5 446.1 L1051.5 458.6 L1052.5 453.7 L1052.5 445.6 L1052.5 459.4 L1053.5 447.2 L1053.5 446.7 L1053.5 458.6 L1054.5 453.6 L1054.5 446.3 L1054.5 458.2 L1055.5 453.1 L1055.5 446.2 L1055.5 458.0 L1056.5 448.1 L1056.5 447.2 L1056.5 459.4 L1057.5 454.7 L1057.5 445.7 L1057.5 458.4 L1058.5 455.2 L1058.5 446.2 L1058.5 460.3 L1059.5 447.7 L1059.5 445.4 L1059.5 457.5 L1060.5 447.5 L1060.5 446.2 L1060.5 459.4 L1061.5 452.1 L1061.5 445.7 L1061.5 459.5 L1062.5 449.5 L1062.5 444.6 L1062.5 457.2 L1063.5 453.8 L1063.5 445.3 L1063.5 457.4 L1064.5 453.9 L1064.5 446.1 L1064.5 458.0 L1065.5 451.5 L1065.5 445.0 L1065.5 457.0 L1066.5 452.0 L1066.5 445.5 L1066.5 458.0 L1067.5 447.3 L1067.5 446.1 L1067.5 459.1 L1068.5 449.5 L1068.5 446.1 L1068.5 458.8 L1069.5 451.7 L1069.5 445.3 L1069.5 458.5 L1070.5 454.6 L1070.5 445.2 L1070.5 458.9 L1071.5 453.1 L1071.5 446.5 L1071.5 458.9 L1072.5 450.8 L1072.5 442.8 L1072.5 457.6 L1073.5 451.3 L1073.5 444.1 L1073.5 457.0 L1074.5 455.9 L1074.5 445.3 L1074.5 459.7 L1075.5 449.2 L1075.5 445.6 L1075.5 458.6 L1076.5 455.8 L1076.5 445.9 L1076.5 458.6 L1077.5 448.5 L1077.5 444.1 L1077.5 457.8 L1078.5 450.6 L1078.5 445.6 L1078.5 457.3 L1079.5 447.9 L1079.5 444.2 L1079.5 458.1 L1080.5 451.1 L1080.5 442.5 L1080.5 456.8 L1081.5 451.8 L1081.5 445.1 L1081.5 459.6 L1082.5 449.9 L1082.5 445.7 L1082.5 457.1 L1083.5 454.2 L1083.5 443.5 L1083.5 459.3 L1084.5 448.1 L1084.5 442.7 L1084.5 458.8 L1085.5 451.6 L1085.5 445.7 L1085.5 456.1 L1086.5 450.0 L1086.5 443.8 L1086.5 457.5 L1087.5 450.1 L1087.5 443.9 L1087.5 456.3 L1088.5 449.3 L1088.5 444.6 L1088.5 457.9 L1089.5 451.2 L1089.5 443.4 L1089.5 459.1 L1090.5 445.5 L1090.5 443.5 L1090.5 459.4 L1091.5 452.1 L1091.5 443.7 L1091.5 458.7 L1092.5 450.8 L1092.5 444.1 L1092.5 456.7 L1093.5 448.2 L1093.5 445.9 L1093.5 460.3 L1094.5 447.7 L1094.5 441.2 L1094.5 457.1 L1095.5 453.4 L1095.5 444.7 L1095.5 458.9 L1096.5 449.4 L1096.5 445.1 L1096.5 458.2 L1097.5 450.6 L1097.5 442.2 L1097.5 457.8 L1098.5 451.7 L1098.5 443.5 L1098.5 458.2 L1099.5 447.9 L1099.5 443.9 L1099.5 457.1 L1100.5 449.5 L1100.5 444.6 L1100.5 455.5 L1101.5 452.2 L1101.5 443.8 L1101.5 458.0 L1102.5 452.0 L1102.5 443.5 L1102.5 458.9 L1103.5 448.9 L1103.5 442.6 L1103.5 456.2 L1104.5 451.9 L1104.5 443.3 L1104.5 457.9 L1105.5 456.3 L1105.5 445.3 L1105.5 458.8 L1106.5 451.9 L1106.5 444.0 L1106.5 456.4 L1107.5 450.2 L1107.5 444.4 L1107.5 456.7 L1108.5 447.1 L1108.5 443.8 L1108.5 457.1 L1109.5 448.1 L1109.5 442.6 L1109.5 456.9 L1110.5 448.4 L1110.5 444.5 L1110.5 457.7 L1111.5 453.4 L1111.5 444.1 L1111.5 458.1 L1112.5 452.9 L1112.5 444.0 L1112.5 458.0 L1113.5 451.2 L1113.5 443.2 L1113.5 458.8 L1114.5 450.3 L1114.5 442.5 L1114.5 457.4 L1115.5 449.5 L1115.5 443.4 L1115.5 457.0 L1116.5 452.5 L1116.5 441.4 L1116.5 458.3 L1117.5 452.5 L1117.5 443.6 L1117.5 456.3 L1118.5 456.6 L1118.5 442.9 L1118.5 458.7 L1119.5 452.4 L1119.5 442.8 L1119.5 456.7 L1120.5 447.1 L1120.5 443.7 L1120.5 457.1 L1121.5 448.1 L1121.5 442.7 L1121.5 458.2 L1122.5 449.1 L1122.5 444.1 L1122.5 456.1 L1123.5 450.9 L1123.5 444.5 L1123.5 456.5 L1124.5 454.8 L1124.5 441.2 L1124.5 457.2 L1125.5 450.4 L1125.5 443.3 L1125.5 456.2 L1126.5 447.2 L1126.5 443.8 L1126.5 455.4 L1127.5 450.7 L1127.5 442.3 L1127.5 458.1 L1128.5 449.8 L1128.5 444.0 L1128.5 456.9 L1129.5 450.6 L1129.5 442.4 L1129.5 457.4 L1130.5 445.5 L1130.5 444.3 L1130.5 457.9 L1131.5 449.2 L1131.5 443.6 L1131.5 456.5 L1132.5 447.5 L1132.5 443.3 L1132.5 457.8 L1133.5 447.0 L1133.5 442.9 L1133.5 460.2 L1134.5 446.2 L1134.5 443.2 L1134.5 456.3 L1135.5 449.3 L1135.5 443.1 L1135.5 457.3 L1136.5 449.7 L1136.5 443.3 L1136.5 456.5 L1137.5 451.1 L1137.5 443.0 L1137.5 456.7 L1138.5 450.2 L1138.5 443.8 L1138.5 456.9 L1139.5 448.2 L1139.5 442.2 L1139.5 455.8 L1140.5 445.4 L1140.5 443.0 L1140.5 456.5 L1141.5 449.7 L1141.5 442.6 L1141.5 455.5 L1142.5 449.8 L1142.5 444.0 L1142.5 455.9 L1143.5 448.2 L1143.5 441.6 L1143.5 456.6 L1144.5 452.8 L1144.5 442.1 L1144.5 454.7 L1145.5 451.7 L1145.5 442.5 L1145.5 455.8 L1146.5 449.0 L1146.5 441.8 L1146.5 455.4 L1147.5 447.5 L1147.5 442.3 L1147.5 455.1 L1148.5 448.6 L1148.5 442.1 L1148.5 457.4 L1149.5 446.3 L1149.5 441.2 L1149.5 457.0 L1150.5 446.7 L1150.5 441.9 L1150.5 454.2 L1151.5 449.1 L1151.5 441.6 L1151.5 457.0 L1152.5 449.7 L1152.5 440.2 L1152.5 455.7 L1153.5 446.3 L1153.5 442.3 L1153.5 457.0 L1154.5 445.7 L1154.5 441.6 L1154.5 455.5 L1155.5 446.0 L1155.5 441.1 L1155.5 454.7 L1156.5 445.8 L1156.5 441.2 L1156.5 454.7 L1157.5 446.5 L1157.5 441.9 L1157.5 457.1 L1158.5 449.2 L1158.5 441.1 L1158.5 455.4 L1159.5 445.5 L1159.5 441.0 L1159.5 455.9 L1160.5 448.3 L1160.5 441.3 L1160.5 453.3 L1161.5 448.0 L1161.5 441.1 L1161.5 453.8 L1162.5 447.3 L1162.5 440.9 L1162.5 452.8 L1163.5 445.5 L1163.5 440.8 L1163.5 454.5 L1164.5 447.3 L1164.5 441.3 L1164.5 454.3 L1165.5 444.8 L1165.5 439.7 L1165.5 454.5 L1166.5 449.4 L1166.5 440.9 L1166.5 454.5 L1167.5 444.7 L1167.5 440.7 L1167.5 453.6" fill="none" stroke="#00FF00" stroke-width="1" shape-rendering="crispEdges"/>
<path d="M390.5 375 V385.3 M436.5 345 V396.1 M434.5 377 V395.6 M438.5 382 V396.6 M444.5 387.5 V397.9 M471.5 368 V404.2 M472.5 372 V404.5 M477.5 384 V405.6 M500.5 381 V411.0 M505.5 362 V411.8 M506.5 368 V411.9 M525.5 365 V414.8 M529.5 387 V415.4 M546.5 395 V419.2 M550.5 392 V420.2 M565.5 398 V423.3 M566.5 416.9 V422.3 M582.5 396 V426.1 M581.5 419.2 V425.1 M581.5 399 V425.9 M582.5 420.9 V424.9 M585.5 405 V426.6 M584.5 419.7 V425.6 M588.5 419 V427.1 M602.5 418 V429.3 M610.5 409 V430.4 M611.5 426.0 V429.4 M616.5 398 V431.2 M615.5 426.2 V430.2 M623.5 408 V432.2 M624.5 425.2 V431.2 M628.5 420 V432.9 M635.5 399 V433.9 M634.5 422.7 V432.9 M639.5 421 V434.5 M638.5 428.8 V433.5 M646.5 402 V435.4 M645.5 431.0 V434.4 M656.5 420 V436.7 M655.5 429.7 V435.7 M662.5 421 V437.4 M663.5 430.8 V436.4 M666.5 404 V437.9 M665.5 430.7 V436.9 M671.5 406 V438.5 M672.5 430.9 V437.5 M675.5 421 V439.0 M674.5 433.1 V438.0 M680.5 370 V439.6 M681.5 431.5 V438.6 M684.5 415 V440.1 M683.5 433.9 V439.1 M688.5 411 V440.6 M689.5 432.1 V439.6 M692.5 424 V441.0 M693.5 434.4 V440.0 M696.5 416 V441.5 M695.5 437.4 V440.5 M700.5 427 V442.0 M701.5 436.8 V441.0 M707.5 428 V442.4 M706.5 437.3 V441.4 M712.5 424 V442.7 M711.5 435.4 V441.7 M714.5 416 V442.9 M713.5 437.6 V441.9 M719.5 425 V443.2 M720.5 437.4 V442.2 M721.5 416 V443.3 M720.5 436.9 V442.3 M726.5 392 V443.6 M727.5 432.6 V442.6 M733.5 431 V444.0 M734.5 439.1 V443.0 M751.5 435 V445.1 M756.5 426 V445.2 M757.5 439.9 V444.2 M761.5 381 V445.3 M760.5 434.5 V444.3 M766.5 432 V445.5 M765.5 441.1 V444.5 M776.5 431 V445.7 M777.5 441.7 V444.7 M786.5 432 V446.0 M785.5 439.7 V445.0 M790.5 396 V446.1 M789.5 436.0 V445.1 M795.5 434 V446.3 M811.5 436 V446.7 M815.5 406 V446.8 M814.5 438.9 V445.8 M818.5 432 V446.9 M817.5 439.9 V445.9 M824.5 438 V447.1 M836.5 413 V447.4 M837.5 440.3 V446.4 M855.5 434 V448.2 M856.5 443.9 V447.2 M871.5 441 V449.1 M887.5 437 V449.9 M900.5 439 V450.5 M1160.5 430 V448.6 M1159.5 440.7 V447.6 M1162.5 386 V448.4 M1163.5 442.0 V447.4 M1163.5 387 V448.4 M1162.5 435.4 V447.4 M1164.5 428 V448.3 M1165.5 443.4 V447.3 " fill="none" stroke="#00FF00" stroke-width="1" shape-rendering="crispEdges"/>
<text x="1247.5" y="110" font-size="11" fill="#000" font-weight="normal" text-anchor="start" textLength="18.5" lengthAdjust="spacingAndGlyphs" stroke="#000" stroke-width="0.12"  xml:space="preserve">Top</text>
<rect x="1248" y="118" width="16" height="17" fill="#A0A0A4" />
<rect x="1249" y="119" width="14" height="1" fill="#D6D6D6" />
<rect x="1249" y="119" width="1" height="15" fill="#D6D6D6" />
<rect x="1248" y="134" width="16" height="1" fill="#404040" />
<rect x="1263" y="118" width="1" height="17" fill="#404040" />
<rect x="1249" y="133" width="14" height="1" fill="#6E6E72" />
<rect x="1262" y="119" width="1" height="15" fill="#6E6E72" />
<path d="M1255 124h1v1h-1zM1254 125h3v1h-3zM1253 126h5v1h-5zM1252 127h7v1h-7z" fill="#000"/>
<rect x="1248" y="135" width="16" height="17" fill="#A0A0A4" />
<rect x="1249" y="136" width="14" height="1" fill="#D6D6D6" />
<rect x="1249" y="136" width="1" height="15" fill="#D6D6D6" />
<rect x="1248" y="151" width="16" height="1" fill="#404040" />
<rect x="1263" y="135" width="1" height="17" fill="#404040" />
<rect x="1249" y="150" width="14" height="1" fill="#6E6E72" />
<rect x="1262" y="136" width="1" height="15" fill="#6E6E72" />
<path d="M1255 144h1v1h-1zM1254 143h3v1h-3zM1253 142h5v1h-5zM1252 141h7v1h-7z" fill="#000"/>
<rect x="1242" y="162" width="30" height="20" fill="#A0A0A4" />
<rect x="1242" y="162" width="30" height="1" fill="#D6D6D6" />
<rect x="1242" y="162" width="1" height="20" fill="#D6D6D6" />
<rect x="1242" y="181" width="30" height="1" fill="#404040" />
<rect x="1271" y="162" width="1" height="20" fill="#404040" />
<rect x="1243" y="180" width="28" height="1" fill="#6E6E72" />
<rect x="1270" y="163" width="1" height="18" fill="#6E6E72" />
<text x="1250" y="176" font-size="11" fill="#000" font-weight="normal" text-anchor="start" textLength="14" lengthAdjust="spacingAndGlyphs" stroke="#000" stroke-width="0.12"  xml:space="preserve">Fit</text>
<text x="1241.5" y="207" font-size="11" fill="#000" font-weight="normal" text-anchor="start" textLength="31.5" lengthAdjust="spacingAndGlyphs" stroke="#000" stroke-width="0.12"  xml:space="preserve">Range</text>
<rect x="1248" y="214" width="16" height="17" fill="#A0A0A4" />
<rect x="1249" y="215" width="14" height="1" fill="#D6D6D6" />
<rect x="1249" y="215" width="1" height="15" fill="#D6D6D6" />
<rect x="1248" y="230" width="16" height="1" fill="#404040" />
<rect x="1263" y="214" width="1" height="17" fill="#404040" />
<rect x="1249" y="229" width="14" height="1" fill="#6E6E72" />
<rect x="1262" y="215" width="1" height="15" fill="#6E6E72" />
<path d="M1255 220h1v1h-1zM1254 221h3v1h-3zM1253 222h5v1h-5zM1252 223h7v1h-7z" fill="#000"/>
<rect x="1248" y="231" width="16" height="17" fill="#A0A0A4" />
<rect x="1249" y="232" width="14" height="1" fill="#D6D6D6" />
<rect x="1249" y="232" width="1" height="15" fill="#D6D6D6" />
<rect x="1248" y="247" width="16" height="1" fill="#404040" />
<rect x="1263" y="231" width="1" height="17" fill="#404040" />
<rect x="1249" y="246" width="14" height="1" fill="#6E6E72" />
<rect x="1262" y="232" width="1" height="15" fill="#6E6E72" />
<path d="M1255 240h1v1h-1zM1254 239h3v1h-3zM1253 238h5v1h-5zM1252 237h7v1h-7z" fill="#000"/>
<rect x="1242" y="263" width="30" height="21" fill="#A0A0A4" />
<rect x="1242" y="263" width="30" height="1" fill="#D6D6D6" />
<rect x="1242" y="263" width="1" height="21" fill="#D6D6D6" />
<rect x="1242" y="283" width="30" height="1" fill="#404040" />
<rect x="1271" y="263" width="1" height="21" fill="#404040" />
<rect x="1243" y="282" width="28" height="1" fill="#6E6E72" />
<rect x="1270" y="264" width="1" height="19" fill="#6E6E72" />
<text x="1248" y="278" font-size="11" fill="#000" font-weight="normal" text-anchor="start" textLength="17" lengthAdjust="spacingAndGlyphs" stroke="#000" stroke-width="0.12"  xml:space="preserve">Set</text>
<text x="1241.5" y="310" font-size="11" fill="#000" font-weight="normal" text-anchor="start" textLength="31" lengthAdjust="spacingAndGlyphs" stroke="#000" stroke-width="0.12"  xml:space="preserve">FrHigh</text>
<rect x="1242" y="318" width="15" height="16" fill="#A0A0A4" />
<rect x="1243" y="319" width="13" height="1" fill="#D6D6D6" />
<rect x="1243" y="319" width="1" height="14" fill="#D6D6D6" />
<rect x="1242" y="333" width="15" height="1" fill="#404040" />
<rect x="1256" y="318" width="1" height="16" fill="#404040" />
<rect x="1243" y="332" width="13" height="1" fill="#6E6E72" />
<rect x="1255" y="319" width="1" height="14" fill="#6E6E72" />
<path d="M1247 326h1v1h-1zM1248 325h1v3h-1zM1249 324h1v5h-1zM1250 323h1v7h-1z" fill="#000"/>
<rect x="1257" y="318" width="15" height="16" fill="#A0A0A4" />
<rect x="1258" y="319" width="13" height="1" fill="#D6D6D6" />
<rect x="1258" y="319" width="1" height="14" fill="#D6D6D6" />
<rect x="1257" y="333" width="15" height="1" fill="#404040" />
<rect x="1271" y="318" width="1" height="16" fill="#404040" />
<rect x="1258" y="332" width="13" height="1" fill="#6E6E72" />
<rect x="1270" y="319" width="1" height="14" fill="#6E6E72" />
<path d="M1265 326h1v1h-1zM1264 325h1v3h-1zM1263 324h1v5h-1zM1262 323h1v7h-1z" fill="#000"/>
<text x="1245" y="355" font-size="11" fill="#000" font-weight="normal" text-anchor="start" textLength="28.5" lengthAdjust="spacingAndGlyphs" stroke="#000" stroke-width="0.12"  xml:space="preserve">FrLow</text>
<rect x="1242" y="361" width="15" height="16" fill="#A0A0A4" />
<rect x="1243" y="362" width="13" height="1" fill="#D6D6D6" />
<rect x="1243" y="362" width="1" height="14" fill="#D6D6D6" />
<rect x="1242" y="376" width="15" height="1" fill="#404040" />
<rect x="1256" y="361" width="1" height="16" fill="#404040" />
<rect x="1243" y="375" width="13" height="1" fill="#6E6E72" />
<rect x="1255" y="362" width="1" height="14" fill="#6E6E72" />
<path d="M1247 369h1v1h-1zM1248 368h1v3h-1zM1249 367h1v5h-1zM1250 366h1v7h-1z" fill="#000"/>
<rect x="1257" y="361" width="15" height="16" fill="#A0A0A4" />
<rect x="1258" y="362" width="13" height="1" fill="#D6D6D6" />
<rect x="1258" y="362" width="1" height="14" fill="#D6D6D6" />
<rect x="1257" y="376" width="15" height="1" fill="#404040" />
<rect x="1271" y="361" width="1" height="16" fill="#404040" />
<rect x="1258" y="375" width="13" height="1" fill="#6E6E72" />
<rect x="1270" y="362" width="1" height="14" fill="#6E6E72" />
<path d="M1265 369h1v1h-1zM1264 368h1v3h-1zM1263 367h1v5h-1zM1262 366h1v7h-1z" fill="#000"/>
<text x="5.5" y="685" font-size="11" fill="#000" font-weight="normal" text-anchor="start" textLength="31" lengthAdjust="spacingAndGlyphs" stroke="#000" stroke-width="0.12"  xml:space="preserve">Ready</text>
<rect x="958" y="673" width="73" height="1" fill="#6E6E72" />
<rect x="958" y="673" width="1" height="16" fill="#6E6E72" />
<rect x="958" y="688" width="73" height="1" fill="#D6D6D6" />
<rect x="1030" y="673" width="1" height="16" fill="#D6D6D6" />
<text x="961.5" y="685" font-size="11" fill="#000" font-weight="normal" text-anchor="start" textLength="48" lengthAdjust="spacingAndGlyphs" stroke="#000" stroke-width="0.12"  xml:space="preserve">L:-84.6dB</text>
<rect x="1033" y="673" width="73" height="1" fill="#6E6E72" />
<rect x="1033" y="673" width="1" height="16" fill="#6E6E72" />
<rect x="1033" y="688" width="73" height="1" fill="#D6D6D6" />
<rect x="1105" y="673" width="1" height="16" fill="#D6D6D6" />
<text x="1036.5" y="685" font-size="11" fill="#000" font-weight="normal" text-anchor="start" textLength="50" lengthAdjust="spacingAndGlyphs" stroke="#000" stroke-width="0.12"  xml:space="preserve">R:-87.0dB</text>
<rect x="1108" y="673" width="156" height="1" fill="#6E6E72" />
<rect x="1108" y="673" width="1" height="16" fill="#6E6E72" />
<rect x="1108" y="688" width="156" height="1" fill="#D6D6D6" />
<rect x="1263" y="673" width="1" height="16" fill="#D6D6D6" />
<text x="1111.5" y="685" font-size="11" fill="#000" font-weight="normal" text-anchor="start" textLength="91" lengthAdjust="spacingAndGlyphs" stroke="#000" stroke-width="0.12"  xml:space="preserve">Spectrum Analyzer</text>
<path d="M1270 687h1v1h-1zM1271 687h1v1h-1zM1271 686h1v1h-1zM1272 686h1v1h-1zM1272 685h1v1h-1zM1273 685h1v1h-1zM1273 684h1v1h-1zM1274 684h1v1h-1zM1274 683h1v1h-1zM1275 683h1v1h-1zM1275 682h1v1h-1zM1276 682h1v1h-1zM1276 681h1v1h-1zM1277 681h1v1h-1zM1277 680h1v1h-1zM1278 680h1v1h-1zM1278 679h1v1h-1zM1279 679h1v1h-1zM1279 678h1v1h-1zM1280 678h1v1h-1zM1280 677h1v1h-1zM1274 687h1v1h-1zM1275 687h1v1h-1zM1275 686h1v1h-1zM1276 686h1v1h-1zM1276 685h1v1h-1zM1277 685h1v1h-1zM1277 684h1v1h-1zM1278 684h1v1h-1zM1278 683h1v1h-1zM1279 683h1v1h-1zM1279 682h1v1h-1zM1280 682h1v1h-1zM1280 681h1v1h-1zM1278 687h1v1h-1zM1279 687h1v1h-1zM1279 686h1v1h-1zM1280 686h1v1h-1zM1280 685h1v1h-1z" fill="#6E6E72"/>
<path d="M1269 687h1v1h-1zM1270 686h1v1h-1zM1271 685h1v1h-1zM1272 684h1v1h-1zM1273 683h1v1h-1zM1274 682h1v1h-1zM1275 681h1v1h-1zM1276 680h1v1h-1zM1277 679h1v1h-1zM1278 678h1v1h-1zM1279 677h1v1h-1zM1280 676h1v1h-1zM1273 687h1v1h-1zM1274 686h1v1h-1zM1275 685h1v1h-1zM1276 684h1v1h-1zM1277 683h1v1h-1zM1278 682h1v1h-1zM1279 681h1v1h-1zM1280 680h1v1h-1zM1277 687h1v1h-1zM1278 686h1v1h-1zM1279 685h1v1h-1zM1280 684h1v1h-1z" fill="#D6D6D6"/>
</svg></body></html>
